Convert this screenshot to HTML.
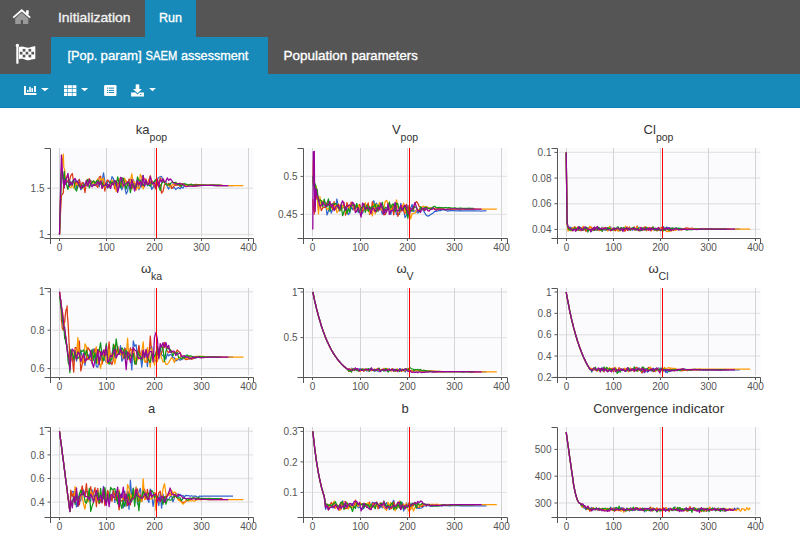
<!DOCTYPE html><html><head><meta charset="utf-8"><style>
html,body{margin:0;padding:0;width:800px;height:550px;overflow:hidden;background:#fff;font-family:"Liberation Sans",sans-serif}
.abs{position:absolute}
.t{position:absolute;white-space:nowrap;color:#fff;font-size:13px;line-height:1}
</style></head><body>

<div class="abs" style="left:0;top:0;width:800px;height:37px;background:#555555"></div>
<div class="abs" style="left:145px;top:0;width:51px;height:37px;background:#178ab9"></div>
<div class="abs" style="left:0;top:37px;width:800px;height:37px;background:#555555"></div>
<div class="abs" style="left:51px;top:37px;width:217px;height:37px;background:#178ab9"></div>
<div class="abs" style="left:0;top:74px;width:800px;height:33px;background:#178ab9"></div>
<div class="abs" style="left:0;top:107px;width:800px;height:1px;background:#0e7fb3"></div>
<svg class="abs" style="left:0;top:0" width="800" height="108" font-family="Liberation Sans, sans-serif">
<g stroke-width="0.35" font-size="13.5">
<text x="58" y="22" fill="#f2f2f2" stroke="#f2f2f2" textLength="72.5" lengthAdjust="spacingAndGlyphs">Initialization</text>
<text x="159" y="22" fill="#fff" stroke="#fff" textLength="23" lengthAdjust="spacingAndGlyphs">Run</text>
<text x="67.45" y="60.1" fill="#fff" stroke="#fff" textLength="29.95" lengthAdjust="spacingAndGlyphs">[Pop.</text>
<text x="100.60" y="60.1" fill="#fff" stroke="#fff" textLength="41.20" lengthAdjust="spacingAndGlyphs">param]</text>
<text x="145.60" y="60.1" fill="#fff" stroke="#fff" textLength="31.60" lengthAdjust="spacingAndGlyphs">SAEM</text>
<text x="180.95" y="60.1" fill="#fff" stroke="#fff" textLength="67.45" lengthAdjust="spacingAndGlyphs">assessment</text>
<text x="283.55" y="60.1" fill="#fff" stroke="#fff" textLength="63.75" lengthAdjust="spacingAndGlyphs">Population</text>
<text x="351.45" y="60.1" fill="#fff" stroke="#fff" textLength="66.25" lengthAdjust="spacingAndGlyphs">parameters</text>
</g>
<path d="M13.2 17.6 L21.7 10.2 L30.2 17.6" fill="none" stroke="#fff" stroke-width="1.8"/>
<rect x="26.1" y="10.3" width="2.6" height="4.2" fill="#fff"/>
<path d="M15.2 18.4 L21.7 12.6 L28.3 18.4 V24 H23 V20 H20.8 V24 H15.2 Z" fill="#999"/>
<rect x="16.3" y="45" width="2.2" height="18.7" fill="#fff"/>
<circle cx="17.4" cy="45.3" r="1.6" fill="#fff"/>
<path d="M19 47 C23 45 27 48.8 30.5 47.3 C32.5 46.6 34 46.3 35.3 46.3 V59 C32 58.8 30 60.8 26.5 60 C23 59.2 21.5 58.3 19 59.3 Z" fill="#fff"/>
<rect x="22.7" y="48.9" width="2.7" height="2.7" fill="#5a5a5a"/>
<rect x="28.5" y="48.9" width="2.7" height="2.7" fill="#5a5a5a"/>
<rect x="19.8" y="51.8" width="2.7" height="2.7" fill="#5a5a5a"/>
<rect x="25.6" y="51.8" width="2.7" height="2.7" fill="#5a5a5a"/>
<rect x="31.4" y="51.8" width="2.7" height="2.7" fill="#5a5a5a"/>
<rect x="22.7" y="54.7" width="2.7" height="2.7" fill="#5a5a5a"/>
<rect x="28.5" y="54.7" width="2.7" height="2.7" fill="#5a5a5a"/>
<g fill="#fff"><rect x="24" y="86" width="2" height="9"/><rect x="24" y="93" width="12.4" height="2"/><rect x="27" y="90" width="1.6" height="2"/><rect x="29.2" y="86.8" width="1.6" height="5.2"/><rect x="31.4" y="88.2" width="1.6" height="3.8"/><rect x="34" y="86" width="1.9" height="6"/><path d="M41 88 H48.8 L44.9 91.3 Z"/></g>
<rect x="64" y="85.2" width="12.4" height="10.8" fill="#fff"/>
<g fill="#178ab9"><rect x="67.3" y="85" width="0.6" height="11"/><rect x="71.9" y="85" width="0.6" height="11"/><rect x="64" y="88.2" width="12.5" height="0.7"/><rect x="64" y="92.2" width="12.5" height="0.7"/></g>
<path d="M81 88 H88.2 L84.6 91.3 Z" fill="#fff"/>
<rect x="104.1" y="85.1" width="12.4" height="10.9" rx="1.2" fill="#fff"/>
<g fill="#178ab9"><rect x="106.9" y="87.6" width="1.1" height="1"/><rect x="106.9" y="89.9" width="1.1" height="1"/><rect x="106.9" y="92" width="1.1" height="1"/><rect x="108.7" y="87.6" width="5.4" height="1"/><rect x="108.7" y="89.9" width="5.4" height="1"/><rect x="108.7" y="92" width="5.4" height="1"/></g>
<g fill="#fff"><rect x="135.7" y="84.4" width="3.6" height="5"/><path d="M133 88.9 H142 L137.5 93.2 Z"/><path d="M131.1 92.6 H135.3 L137.5 94.6 L139.7 92.6 H143.9 V96.4 H131.1 Z"/><path d="M149.1 88.1 H155.9 L152.5 91.2 Z"/></g>
<rect x="140" y="94.2" width="1.4" height="0.9" fill="#178ab9"/>
</svg>
<svg class="abs" style="left:0;top:108px" width="800" height="442" viewBox="0 108 800 442" font-family="Liberation Sans, sans-serif">
<rect x="52" y="148" width="201.5" height="88.5" fill="#fbfbfd"/>
<line x1="52" y1="234.50" x2="253" y2="234.50" stroke="#e6e6e8" stroke-width="1.4"/>
<line x1="52" y1="188.30" x2="253" y2="188.30" stroke="#e6e6e8" stroke-width="1.4"/>
<line x1="59.50" y1="148" x2="59.50" y2="236.5" stroke="#d4d4d6" stroke-width="1"/>
<line x1="106.50" y1="148" x2="106.50" y2="236.5" stroke="#d4d4d6" stroke-width="1"/>
<line x1="154.50" y1="148" x2="154.50" y2="236.5" stroke="#d4d4d6" stroke-width="1"/>
<line x1="201.50" y1="148" x2="201.50" y2="236.5" stroke="#d4d4d6" stroke-width="1"/>
<line x1="248.50" y1="148" x2="248.50" y2="236.5" stroke="#d4d4d6" stroke-width="1"/>
<polyline points="59.5,234.5 60.0,220.2 60.4,205.9 60.9,191.5 61.4,177.2 61.9,177.7 62.3,178.1 62.8,178.6 63.3,179.1 63.8,184.6 64.2,179.3 64.7,176.9 65.2,177.3 66.6,182.5 68.0,182.4 69.4,181.7 70.8,185.4 72.3,182.0 73.7,179.9 75.1,179.8 76.5,188.7 77.9,181.0 79.4,179.5 80.8,189.7 82.2,188.3 83.6,182.7 85.0,185.7 86.4,185.3 87.9,184.3 89.3,182.3 90.7,180.3 92.1,183.2 93.5,185.5 95.0,183.1 96.4,184.1 97.8,183.9 99.2,186.6 100.6,179.7 102.1,180.9 103.5,172.8 104.9,181.9 106.3,187.1 107.7,181.5 109.1,180.9 110.6,183.1 112.0,176.6 113.4,178.6 114.8,185.6 116.2,183.9 117.7,190.4 119.1,187.0 120.5,180.1 121.9,190.0 123.3,182.9 124.7,186.3 126.2,194.0 127.6,191.2 129.0,180.6 130.4,179.3 131.8,179.6 133.3,179.7 134.7,183.7 136.1,186.0 137.5,179.7 138.9,189.6 140.3,187.0 141.8,176.8 143.2,175.5 144.6,186.5 146.0,181.3 147.4,185.8 148.9,184.3 150.3,181.5 151.7,189.3 153.1,187.5 154.5,181.9 156.0,181.1 157.4,179.0 158.8,177.3 160.2,176.8 161.6,176.4 163.0,180.7 164.5,181.6 165.9,181.4 167.3,186.7 168.7,189.2 170.1,184.1 171.6,187.1 173.0,188.0 174.4,187.6 175.8,189.6 177.2,188.1 178.6,187.6 180.1,188.8 181.5,187.0 182.9,188.1 184.3,185.7 185.7,186.1 187.2,185.4 188.6,185.1 190.0,185.0 191.4,185.1 192.8,184.7 194.2,184.7 195.7,185.1 197.1,185.3 198.5,185.4 199.9,185.3 201.3,185.4 202.8,185.2 204.2,185.4 205.6,185.5 207.0,185.4 208.4,185.4 209.9,185.4 211.3,185.4 212.7,185.5 214.1,185.5 215.5,185.5 216.9,185.5 218.4,185.5 219.8,185.5 221.2,185.5 222.6,185.5 224.0,185.5 225.5,185.5 226.9,185.5 228.3,185.5 229.7,185.5 231.1,185.5 232.5,185.5 233.0,185.5" fill="none" stroke="#3366cc" stroke-width="1.25" stroke-linejoin="round"/>
<polyline points="59.5,234.5 60.0,224.8 60.4,215.1 60.9,205.4 61.4,195.7 61.9,195.0 62.3,194.3 62.8,193.6 63.3,192.9 63.8,177.1 64.2,173.3 64.7,184.0 65.2,179.7 66.6,182.5 68.0,180.4 69.4,180.8 70.8,175.7 72.3,173.5 73.7,182.1 75.1,184.4 76.5,181.5 77.9,186.3 79.4,179.3 80.8,187.1 82.2,182.5 83.6,183.9 85.0,192.7 86.4,182.1 87.9,180.1 89.3,178.7 90.7,181.7 92.1,182.4 93.5,181.0 95.0,182.8 96.4,185.6 97.8,187.3 99.2,177.1 100.6,176.2 102.1,188.1 103.5,180.9 104.9,191.1 106.3,182.0 107.7,179.9 109.1,182.2 110.6,183.2 112.0,184.6 113.4,182.3 114.8,188.8 116.2,180.9 117.7,185.8 119.1,179.9 120.5,184.6 121.9,183.3 123.3,179.6 124.7,182.0 126.2,181.0 127.6,185.5 129.0,179.1 130.4,179.6 131.8,189.0 133.3,182.9 134.7,186.4 136.1,189.8 137.5,182.6 138.9,184.9 140.3,180.1 141.8,186.9 143.2,179.1 144.6,178.8 146.0,179.4 147.4,184.2 148.9,179.7 150.3,184.2 151.7,180.3 153.1,183.0 154.5,186.5 156.0,189.2 157.4,183.0 158.8,186.7 160.2,184.6 161.6,193.1 163.0,191.4 164.5,184.7 165.9,183.7 167.3,184.8 168.7,183.3 170.1,185.1 171.6,188.6 173.0,187.2 174.4,185.6 175.8,184.9 177.2,185.3 178.6,184.7 180.1,186.6 181.5,184.0 182.9,183.6 184.3,184.8 185.7,184.6 187.2,184.6 188.6,184.8 190.0,184.6 191.4,184.4 192.8,185.0 194.2,184.8 195.7,184.3 197.1,184.7 198.5,184.6 199.9,184.9 201.3,184.7 202.8,185.0 204.2,185.2 205.6,185.1 207.0,185.2 208.4,185.1 209.9,185.0 211.3,185.1 212.7,185.1 214.1,184.9 215.5,185.0 216.9,185.0 218.4,185.0 219.8,185.0 221.2,185.0 222.6,185.0" fill="none" stroke="#dc3912" stroke-width="1.25" stroke-linejoin="round"/>
<polyline points="59.5,234.5 60.0,217.9 60.4,201.2 60.9,184.6 61.4,168.0 61.9,164.5 62.3,161.0 62.8,157.6 63.3,154.1 63.8,167.5 64.2,168.3 64.7,170.2 65.2,176.9 66.6,177.9 68.0,175.8 69.4,187.0 70.8,187.7 72.3,184.5 73.7,188.1 75.1,186.3 76.5,183.4 77.9,185.5 79.4,184.8 80.8,187.6 82.2,188.1 83.6,185.8 85.0,187.6 86.4,180.0 87.9,179.9 89.3,180.1 90.7,185.5 92.1,183.5 93.5,181.5 95.0,185.8 96.4,181.2 97.8,178.8 99.2,184.3 100.6,178.5 102.1,180.1 103.5,178.0 104.9,187.4 106.3,185.0 107.7,185.0 109.1,186.8 110.6,186.3 112.0,180.0 113.4,182.7 114.8,184.1 116.2,191.7 117.7,187.0 119.1,178.6 120.5,185.5 121.9,184.1 123.3,187.1 124.7,178.2 126.2,182.5 127.6,181.6 129.0,184.5 130.4,181.5 131.8,173.8 133.3,183.1 134.7,181.7 136.1,189.7 137.5,187.4 138.9,188.6 140.3,174.3 141.8,177.2 143.2,189.0 144.6,184.9 146.0,183.6 147.4,184.1 148.9,179.6 150.3,175.5 151.7,182.3 153.1,184.7 154.5,181.8 156.0,183.9 157.4,178.8 158.8,184.1 160.2,177.5 161.6,180.7 163.0,180.8 164.5,180.6 165.9,184.3 167.3,184.7 168.7,185.6 170.1,186.9 171.6,185.4 173.0,184.5 174.4,184.7 175.8,182.8 177.2,184.4 178.6,183.3 180.1,183.4 181.5,184.7 182.9,185.0 184.3,184.8 185.7,185.6 187.2,185.7 188.6,185.6 190.0,185.5 191.4,185.8 192.8,185.4 194.2,185.9 195.7,186.3 197.1,186.0 198.5,185.5 199.9,185.5 201.3,185.3 202.8,185.4 204.2,185.4 205.6,185.3 207.0,185.3 208.4,185.3 209.9,185.3 211.3,185.3 212.7,185.4 214.1,185.5 215.5,185.6 216.9,185.5 218.4,185.5 219.8,185.5 221.2,185.5 222.6,185.5 224.0,185.5 225.5,185.5 226.9,185.5 228.3,185.5 229.7,185.5 231.1,185.5 232.5,185.5 234.0,185.5 235.4,185.5 236.8,185.5 238.2,185.5 239.6,185.5 241.1,185.5 242.5,185.5 243.4,185.5" fill="none" stroke="#ff9900" stroke-width="1.25" stroke-linejoin="round"/>
<polyline points="59.5,234.5 60.0,218.8 60.4,203.1 60.9,187.4 61.4,171.7 61.9,173.1 62.3,174.4 62.8,175.8 63.3,177.2 63.8,180.8 64.2,171.4 64.7,180.2 65.2,178.3 66.6,184.8 68.0,189.5 69.4,179.7 70.8,184.9 72.3,181.7 73.7,180.4 75.1,188.8 76.5,191.0 77.9,186.1 79.4,184.1 80.8,187.7 82.2,187.9 83.6,185.1 85.0,184.6 86.4,183.1 87.9,179.3 89.3,187.8 90.7,184.8 92.1,182.2 93.5,180.9 95.0,183.4 96.4,181.3 97.8,180.1 99.2,182.3 100.6,184.1 102.1,182.1 103.5,185.9 104.9,185.4 106.3,184.6 107.7,184.7 109.1,187.6 110.6,181.5 112.0,183.4 113.4,181.7 114.8,181.1 116.2,185.7 117.7,176.9 119.1,183.8 120.5,187.8 121.9,178.1 123.3,178.1 124.7,183.1 126.2,189.0 127.6,183.2 129.0,182.6 130.4,192.6 131.8,184.7 133.3,184.0 134.7,188.1 136.1,187.0 137.5,176.9 138.9,180.5 140.3,180.5 141.8,182.9 143.2,185.5 144.6,183.7 146.0,181.5 147.4,184.8 148.9,184.9 150.3,186.3 151.7,182.9 153.1,182.8 154.5,181.3 156.0,179.3 157.4,183.1 158.8,185.6 160.2,190.7 161.6,183.6 163.0,181.4 164.5,182.6 165.9,184.4 167.3,185.2 168.7,184.6 170.1,183.7 171.6,182.7 173.0,182.2 174.4,182.9 175.8,182.2 177.2,184.1 178.6,184.6 180.1,184.7 181.5,186.0 182.9,184.8 184.3,183.5 185.7,184.2 187.2,184.4 188.6,185.5 190.0,184.4 191.4,184.4 192.8,185.1 194.2,185.4 195.7,185.2 197.1,185.2 198.5,185.2 199.9,185.1 201.3,185.1 202.8,185.1 204.2,185.2 205.6,185.2 207.0,185.3 208.4,185.3 209.9,185.2 211.3,185.1 212.7,185.1 214.1,185.1 215.5,185.1 216.9,185.0 218.4,185.1 219.8,185.0 220.3,185.0" fill="none" stroke="#109618" stroke-width="1.25" stroke-linejoin="round"/>
<polyline points="59.5,234.5 60.0,214.6 60.4,194.8 60.9,174.9 61.4,155.0 61.9,162.2 62.3,169.4 62.8,176.5 63.3,183.7 63.8,181.9 64.2,187.9 64.7,179.9 65.2,184.5 66.6,177.7 68.0,173.4 69.4,186.1 70.8,181.8 72.3,185.2 73.7,179.8 75.1,178.4 76.5,181.3 77.9,181.9 79.4,185.8 80.8,188.6 82.2,185.3 83.6,187.2 85.0,186.0 86.4,180.4 87.9,186.4 89.3,179.7 90.7,184.6 92.1,186.8 93.5,184.6 95.0,185.4 96.4,183.8 97.8,181.6 99.2,184.4 100.6,181.2 102.1,188.3 103.5,186.0 104.9,185.3 106.3,183.4 107.7,188.0 109.1,184.0 110.6,188.5 112.0,182.9 113.4,184.9 114.8,180.4 116.2,182.4 117.7,192.3 119.1,186.5 120.5,177.4 121.9,178.3 123.3,185.8 124.7,184.6 126.2,183.6 127.6,181.8 129.0,182.2 130.4,188.2 131.8,179.6 133.3,185.8 134.7,191.2 136.1,184.3 137.5,180.3 138.9,184.9 140.3,181.6 141.8,185.3 143.2,175.7 144.6,186.2 146.0,180.1 147.4,184.2 148.9,184.2 150.3,176.1 151.7,182.1 153.1,184.1 154.5,182.5 156.0,187.9 157.4,179.1 158.8,186.9 160.2,178.7 161.6,182.2 163.0,178.6 164.5,182.3 165.9,180.9 167.3,177.9 168.7,180.5 170.1,178.8 171.6,180.2 173.0,182.8 174.4,183.5 175.8,184.1 177.2,183.6 178.6,183.6 180.1,183.3 181.5,184.1 182.9,184.4 184.3,185.3 185.7,186.6 187.2,186.5 188.6,186.0 190.0,186.2 191.4,186.0 192.8,186.3 194.2,185.9 195.7,186.1 197.1,185.8 198.5,186.0 199.9,185.5 201.3,185.6 202.8,185.4 204.2,185.3 205.6,185.3 207.0,185.3 208.4,185.4 209.9,185.4 211.3,185.4 212.7,185.4 214.1,185.4 215.5,185.5 216.9,185.5 218.4,185.5 219.8,185.5 221.2,185.5 222.6,185.5 224.0,185.5 225.5,185.5 226.9,185.5 228.3,185.5" fill="none" stroke="#990099" stroke-width="1.25" stroke-linejoin="round"/>
<line x1="156.50" y1="148" x2="156.50" y2="238" stroke="#ff0000" stroke-width="1"/>
<path d="M44.5,148.5 H50.5 V244 M44.5,238.5 H253.5 V244" fill="none" stroke="#555" stroke-width="1"/>
<line x1="47.5" y1="234.50" x2="50.5" y2="234.50" stroke="#555" stroke-width="1"/>
<text x="44.5" y="238.10" font-size="10" fill="#555" text-anchor="end">1</text>
<line x1="47.5" y1="188.30" x2="50.5" y2="188.30" stroke="#555" stroke-width="1"/>
<text x="44.5" y="191.90" font-size="10" fill="#555" text-anchor="end">1.5</text>
<line x1="59.50" y1="238" x2="59.50" y2="241" stroke="#555" stroke-width="1"/>
<text x="59.50" y="250.7" font-size="10" fill="#555" text-anchor="middle">0</text>
<line x1="106.50" y1="238" x2="106.50" y2="241" stroke="#555" stroke-width="1"/>
<text x="106.50" y="250.7" font-size="10" fill="#555" text-anchor="middle">100</text>
<line x1="154.50" y1="238" x2="154.50" y2="241" stroke="#555" stroke-width="1"/>
<text x="154.50" y="250.7" font-size="10" fill="#555" text-anchor="middle">200</text>
<line x1="201.50" y1="238" x2="201.50" y2="241" stroke="#555" stroke-width="1"/>
<text x="201.50" y="250.7" font-size="10" fill="#555" text-anchor="middle">300</text>
<line x1="248.50" y1="238" x2="248.50" y2="241" stroke="#555" stroke-width="1"/>
<text x="248.50" y="250.7" font-size="10" fill="#555" text-anchor="middle">400</text>
<text x="151.5" y="133.5" font-size="13" fill="#333" text-anchor="middle">ka<tspan font-size="10.5" dy="7">pop</tspan></text>
<rect x="305" y="148" width="202.5" height="88.5" fill="#fbfbfd"/>
<line x1="305" y1="176.40" x2="507" y2="176.40" stroke="#e6e6e8" stroke-width="1.4"/>
<line x1="305" y1="214.40" x2="507" y2="214.40" stroke="#e6e6e8" stroke-width="1.4"/>
<line x1="312.50" y1="148" x2="312.50" y2="236.5" stroke="#d4d4d6" stroke-width="1"/>
<line x1="360.50" y1="148" x2="360.50" y2="236.5" stroke="#d4d4d6" stroke-width="1"/>
<line x1="407.50" y1="148" x2="407.50" y2="236.5" stroke="#d4d4d6" stroke-width="1"/>
<line x1="454.50" y1="148" x2="454.50" y2="236.5" stroke="#d4d4d6" stroke-width="1"/>
<line x1="501.50" y1="148" x2="501.50" y2="236.5" stroke="#d4d4d6" stroke-width="1"/>
<polyline points="312.8,176.4 313.3,178.1 313.8,173.2 314.3,172.5 314.7,205.1 315.2,186.3 315.7,189.1 316.1,192.1 317.1,196.5 318.5,210.0 319.9,200.7 321.3,202.4 322.8,202.9 324.2,204.0 325.6,202.9 327.0,215.0 328.4,211.1 329.9,206.1 331.3,213.1 332.7,208.7 334.1,209.1 335.5,209.4 336.9,199.0 338.4,207.0 339.8,211.1 341.2,206.0 342.6,207.9 344.0,207.4 345.5,206.5 346.9,208.6 348.3,214.6 349.7,213.0 351.1,206.8 352.5,209.7 354.0,204.6 355.4,207.0 356.8,206.6 358.2,212.7 359.6,204.7 361.1,209.7 362.5,213.3 363.9,209.5 365.3,206.2 366.7,209.7 368.2,205.0 369.6,207.3 371.0,212.0 372.4,209.8 373.8,200.6 375.2,208.2 376.7,203.1 378.1,211.2 379.5,209.3 380.9,209.4 382.3,214.1 383.8,208.5 385.2,214.6 386.6,209.9 388.0,208.5 389.4,206.4 390.8,214.5 392.3,207.8 393.7,203.8 395.1,207.7 396.5,214.6 397.9,213.1 399.4,214.4 400.8,203.4 402.2,210.4 403.6,209.5 405.0,217.5 406.4,215.7 407.9,205.4 409.3,214.2 410.7,208.5 412.1,204.4 413.5,211.5 415.0,210.7 416.4,211.9 417.8,213.1 419.2,211.8 420.6,209.5 422.0,208.8 423.5,210.6 424.9,213.1 426.3,215.3 427.7,216.2 429.1,215.7 430.6,214.4 432.0,213.9 433.4,212.7 434.8,211.2 436.2,211.3 437.7,210.8 439.1,210.6 440.5,210.6 441.9,210.0 443.3,209.9 444.7,210.2 446.2,210.2 447.6,211.2 449.0,210.9 450.4,210.7 451.8,210.6 453.3,210.6 454.7,210.7 456.1,210.9 457.5,210.9 458.9,210.8 460.3,210.7 461.8,210.8 463.2,210.8 464.6,210.8 466.0,210.8 467.4,210.9 468.9,210.9 470.3,210.9 471.7,210.9 473.1,210.9 474.5,210.9 475.9,210.9 477.4,211.0 478.8,210.9 480.2,211.0 481.6,211.0 483.0,210.9 484.5,210.9 485.9,210.9 486.4,211.0" fill="none" stroke="#3366cc" stroke-width="1.25" stroke-linejoin="round"/>
<polyline points="312.8,199.2 313.3,209.2 313.8,211.1 314.3,214.0 314.7,187.4 315.2,190.0 315.7,197.6 316.1,199.2 317.1,192.4 318.5,199.3 319.9,204.1 321.3,210.6 322.8,207.7 324.2,207.4 325.6,207.4 327.0,202.5 328.4,200.6 329.9,209.3 331.3,204.3 332.7,209.7 334.1,201.6 335.5,209.5 336.9,208.2 338.4,204.2 339.8,205.8 341.2,206.1 342.6,206.9 344.0,202.3 345.5,215.1 346.9,202.6 348.3,206.3 349.7,208.2 351.1,202.1 352.5,204.0 354.0,210.1 355.4,205.3 356.8,207.7 358.2,207.8 359.6,204.5 361.1,208.4 362.5,211.9 363.9,208.0 365.3,206.9 366.7,206.7 368.2,202.9 369.6,214.4 371.0,212.4 372.4,201.6 373.8,210.6 375.2,207.9 376.7,208.5 378.1,210.9 379.5,204.7 380.9,203.8 382.3,209.6 383.8,214.8 385.2,214.4 386.6,211.3 388.0,208.3 389.4,209.3 390.8,209.9 392.3,205.9 393.7,214.8 395.1,207.1 396.5,206.2 397.9,216.4 399.4,212.1 400.8,212.0 402.2,205.3 403.6,210.0 405.0,213.7 406.4,204.3 407.9,213.5 409.3,205.3 410.7,211.2 412.1,210.4 413.5,209.9 415.0,203.3 416.4,201.6 417.8,203.2 419.2,206.5 420.6,207.6 422.0,209.8 423.5,208.7 424.9,210.5 426.3,208.6 427.7,207.4 429.1,209.1 430.6,207.8 432.0,208.7 433.4,208.1 434.8,209.3 436.2,208.9 437.7,209.2 439.1,207.9 440.5,208.3 441.9,209.0 443.3,208.9 444.7,209.5 446.2,209.5 447.6,209.2 449.0,209.4 450.4,209.2 451.8,209.3 453.3,208.8 454.7,209.1 456.1,209.0 457.5,208.9 458.9,209.0 460.3,209.1 461.8,209.1 463.2,209.0 464.6,209.1 466.0,209.1 467.4,209.0 468.9,209.1 470.3,209.1 471.7,209.1 473.1,209.0 474.5,209.1 475.9,209.1" fill="none" stroke="#dc3912" stroke-width="1.25" stroke-linejoin="round"/>
<polyline points="312.8,184.0 313.3,161.2 313.8,165.6 314.3,172.1 314.7,200.4 315.2,197.8 315.7,186.5 316.1,185.9 317.1,194.6 318.5,214.0 319.9,196.7 321.3,206.0 322.8,200.8 324.2,202.4 325.6,205.1 327.0,209.5 328.4,208.4 329.9,209.6 331.3,204.1 332.7,205.4 334.1,207.3 335.5,205.1 336.9,212.6 338.4,210.6 339.8,205.6 341.2,210.5 342.6,205.7 344.0,207.1 345.5,212.0 346.9,213.1 348.3,210.0 349.7,204.9 351.1,204.3 352.5,203.3 354.0,207.0 355.4,210.8 356.8,210.6 358.2,204.9 359.6,207.0 361.1,214.0 362.5,206.5 363.9,209.4 365.3,202.7 366.7,210.5 368.2,207.8 369.6,213.5 371.0,210.0 372.4,216.0 373.8,203.7 375.2,213.8 376.7,204.6 378.1,208.1 379.5,202.3 380.9,209.9 382.3,210.4 383.8,209.2 385.2,201.4 386.6,200.3 388.0,204.1 389.4,202.8 390.8,210.8 392.3,204.3 393.7,205.2 395.1,209.8 396.5,199.9 397.9,207.3 399.4,207.8 400.8,207.4 402.2,208.5 403.6,203.1 405.0,212.1 406.4,209.4 407.9,209.2 409.3,211.6 410.7,218.8 412.1,213.7 413.5,213.4 415.0,213.2 416.4,210.0 417.8,210.4 419.2,209.1 420.6,207.3 422.0,207.3 423.5,206.1 424.9,207.3 426.3,206.6 427.7,207.4 429.1,208.2 430.6,208.7 432.0,208.8 433.4,208.8 434.8,208.2 436.2,209.3 437.7,209.6 439.1,209.1 440.5,208.8 441.9,208.9 443.3,209.0 444.7,209.2 446.2,209.6 447.6,209.4 449.0,209.1 450.4,209.2 451.8,209.3 453.3,209.3 454.7,209.2 456.1,209.2 457.5,209.1 458.9,209.2 460.3,209.1 461.8,209.2 463.2,209.1 464.6,209.1 466.0,209.1 467.4,209.0 468.9,209.0 470.3,209.1 471.7,209.1 473.1,209.1 474.5,209.1 475.9,209.1 477.4,209.1 478.8,209.1 480.2,209.1 481.6,209.1 483.0,209.1 484.5,209.1 485.9,209.1 487.3,209.1 488.7,209.1 490.1,209.1 491.6,209.1 493.0,209.1 494.4,209.1 495.8,209.1 496.8,209.1" fill="none" stroke="#ff9900" stroke-width="1.25" stroke-linejoin="round"/>
<polyline points="312.8,176.4 313.3,184.9 313.8,186.1 314.3,187.1 314.7,193.3 315.2,183.9 315.7,185.8 316.1,191.9 317.1,189.1 318.5,201.8 319.9,199.7 321.3,200.5 322.8,206.6 324.2,199.2 325.6,204.8 327.0,207.0 328.4,198.9 329.9,211.4 331.3,205.3 332.7,203.6 334.1,204.3 335.5,203.5 336.9,204.4 338.4,207.4 339.8,210.3 341.2,204.3 342.6,215.7 344.0,211.7 345.5,207.1 346.9,213.6 348.3,208.5 349.7,212.0 351.1,205.9 352.5,205.3 354.0,204.8 355.4,208.5 356.8,203.4 358.2,210.8 359.6,212.0 361.1,207.6 362.5,207.9 363.9,203.9 365.3,212.5 366.7,205.1 368.2,211.4 369.6,206.7 371.0,208.8 372.4,206.5 373.8,206.5 375.2,203.8 376.7,211.8 378.1,205.0 379.5,206.6 380.9,207.0 382.3,202.3 383.8,210.4 385.2,207.4 386.6,207.9 388.0,209.7 389.4,202.0 390.8,208.1 392.3,204.4 393.7,204.4 395.1,211.6 396.5,203.2 397.9,203.9 399.4,211.3 400.8,207.5 402.2,210.0 403.6,208.7 405.0,205.5 406.4,210.7 407.9,218.2 409.3,207.6 410.7,209.7 412.1,211.4 413.5,207.4 415.0,207.2 416.4,207.0 417.8,210.9 419.2,211.9 420.6,206.8 422.0,208.2 423.5,209.2 424.9,207.4 426.3,207.1 427.7,208.3 429.1,208.2 430.6,209.3 432.0,207.8 433.4,206.9 434.8,206.3 436.2,207.7 437.7,207.6 439.1,207.4 440.5,207.6 441.9,207.5 443.3,207.8 444.7,207.7 446.2,207.6 447.6,207.8 449.0,207.5 450.4,207.8 451.8,208.1 453.3,208.0 454.7,207.9 456.1,208.2 457.5,208.3 458.9,208.2 460.3,208.0 461.8,208.2 463.2,208.3 464.6,208.3 466.0,208.3 467.4,208.4 468.9,208.2 470.3,208.3 471.7,208.3 473.1,208.3 473.6,208.3" fill="none" stroke="#109618" stroke-width="1.25" stroke-linejoin="round"/>
<polyline points="312.8,229.6 313.3,151.7 313.8,153.3 314.3,151.3 314.7,205.4 315.2,211.6 315.7,192.2 316.1,188.8 317.1,195.9 318.5,199.9 319.9,206.2 321.3,205.5 322.8,202.1 324.2,204.6 325.6,206.8 327.0,204.5 328.4,205.3 329.9,201.3 331.3,207.1 332.7,204.1 334.1,210.7 335.5,207.1 336.9,205.6 338.4,205.6 339.8,209.6 341.2,203.9 342.6,200.8 344.0,204.7 345.5,210.3 346.9,207.3 348.3,205.5 349.7,205.0 351.1,206.4 352.5,202.1 354.0,204.0 355.4,212.6 356.8,211.0 358.2,207.6 359.6,211.4 361.1,217.1 362.5,203.1 363.9,204.2 365.3,209.3 366.7,208.0 368.2,207.7 369.6,208.7 371.0,213.7 372.4,207.8 373.8,208.3 375.2,211.8 376.7,208.7 378.1,207.1 379.5,209.6 380.9,202.9 382.3,207.5 383.8,214.1 385.2,209.0 386.6,212.2 388.0,203.7 389.4,214.4 390.8,210.5 392.3,210.6 393.7,210.2 395.1,202.3 396.5,210.9 397.9,211.3 399.4,209.1 400.8,205.2 402.2,210.7 403.6,206.7 405.0,205.1 406.4,207.7 407.9,212.2 409.3,215.0 410.7,208.5 412.1,209.2 413.5,206.7 415.0,202.5 416.4,207.1 417.8,211.3 419.2,210.1 420.6,212.4 422.0,208.6 423.5,208.0 424.9,210.3 426.3,207.7 427.7,210.6 429.1,211.1 430.6,209.3 432.0,209.3 433.4,208.0 434.8,209.3 436.2,210.3 437.7,209.1 439.1,209.0 440.5,209.4 441.9,209.0 443.3,209.4 444.7,209.4 446.2,209.7 447.6,209.3 449.0,209.2 450.4,209.1 451.8,208.8 453.3,208.9 454.7,208.9 456.1,208.9 457.5,209.2 458.9,209.1 460.3,209.1 461.8,209.0 463.2,208.9 464.6,209.0 466.0,209.0 467.4,209.0 468.9,209.1 470.3,209.0 471.7,209.0 473.1,209.1 474.5,209.1 475.9,209.1 477.4,209.1 478.8,209.1 480.2,209.1 481.6,209.1" fill="none" stroke="#990099" stroke-width="1.25" stroke-linejoin="round"/>
<line x1="409.50" y1="148" x2="409.50" y2="238" stroke="#ff0000" stroke-width="1"/>
<path d="M297.5,148.5 H303.5 V244 M297.5,238.5 H507.5 V244" fill="none" stroke="#555" stroke-width="1"/>
<line x1="300.5" y1="176.40" x2="303.5" y2="176.40" stroke="#555" stroke-width="1"/>
<text x="297.5" y="180.00" font-size="10" fill="#555" text-anchor="end">0.5</text>
<line x1="300.5" y1="214.40" x2="303.5" y2="214.40" stroke="#555" stroke-width="1"/>
<text x="297.5" y="218.00" font-size="10" fill="#555" text-anchor="end">0.45</text>
<line x1="312.50" y1="238" x2="312.50" y2="241" stroke="#555" stroke-width="1"/>
<text x="312.50" y="250.7" font-size="10" fill="#555" text-anchor="middle">0</text>
<line x1="360.50" y1="238" x2="360.50" y2="241" stroke="#555" stroke-width="1"/>
<text x="360.50" y="250.7" font-size="10" fill="#555" text-anchor="middle">100</text>
<line x1="407.50" y1="238" x2="407.50" y2="241" stroke="#555" stroke-width="1"/>
<text x="407.50" y="250.7" font-size="10" fill="#555" text-anchor="middle">200</text>
<line x1="454.50" y1="238" x2="454.50" y2="241" stroke="#555" stroke-width="1"/>
<text x="454.50" y="250.7" font-size="10" fill="#555" text-anchor="middle">300</text>
<line x1="501.50" y1="238" x2="501.50" y2="241" stroke="#555" stroke-width="1"/>
<text x="501.50" y="250.7" font-size="10" fill="#555" text-anchor="middle">400</text>
<text x="405.0" y="133.5" font-size="13" fill="#333" text-anchor="middle">V<tspan font-size="10.5" dy="7">pop</tspan></text>
<rect x="559" y="148" width="201.5" height="88.5" fill="#fbfbfd"/>
<line x1="559" y1="152.40" x2="760" y2="152.40" stroke="#e6e6e8" stroke-width="1.4"/>
<line x1="559" y1="178.06" x2="760" y2="178.06" stroke="#e6e6e8" stroke-width="1.4"/>
<line x1="559" y1="203.72" x2="760" y2="203.72" stroke="#e6e6e8" stroke-width="1.4"/>
<line x1="559" y1="229.38" x2="760" y2="229.38" stroke="#e6e6e8" stroke-width="1.4"/>
<line x1="566.50" y1="148" x2="566.50" y2="236.5" stroke="#d4d4d6" stroke-width="1"/>
<line x1="613.50" y1="148" x2="613.50" y2="236.5" stroke="#d4d4d6" stroke-width="1"/>
<line x1="660.50" y1="148" x2="660.50" y2="236.5" stroke="#d4d4d6" stroke-width="1"/>
<line x1="708.50" y1="148" x2="708.50" y2="236.5" stroke="#d4d4d6" stroke-width="1"/>
<line x1="755.50" y1="148" x2="755.50" y2="236.5" stroke="#d4d4d6" stroke-width="1"/>
<polyline points="566.2,152.4 567.1,223.0 568.1,227.6 569.0,227.4 569.9,227.1 570.9,227.6 571.8,227.5 572.8,230.2 573.7,229.8 574.7,228.8 575.6,228.3 576.6,230.4 577.5,228.8 578.5,228.6 579.4,226.6 580.4,227.6 581.3,229.2 582.2,229.6 583.2,230.1 584.1,229.9 585.1,228.5 586.0,229.9 587.0,229.7 587.9,229.6 588.9,227.3 589.8,229.3 590.8,231.6 591.7,231.2 592.6,230.2 593.6,227.3 594.5,228.3 595.5,229.7 596.4,230.4 597.4,229.1 598.3,228.4 599.3,227.9 600.2,228.8 601.2,230.0 602.1,227.1 603.0,228.8 604.0,228.0 604.9,230.3 605.9,230.3 606.8,229.2 607.8,227.7 608.7,227.5 609.7,227.7 610.6,227.0 611.6,230.4 612.5,229.9 613.4,230.2 614.4,228.9 615.3,229.4 616.3,228.6 617.2,229.5 618.2,229.9 619.1,228.2 620.1,229.2 621.0,230.3 622.0,229.5 622.9,228.3 623.8,228.7 624.8,229.8 625.7,229.1 626.7,228.8 627.6,230.2 628.6,229.8 629.5,228.5 630.5,229.3 631.4,228.2 632.4,230.3 633.3,228.7 634.3,230.1 635.2,229.9 636.1,228.6 637.1,230.2 638.0,229.2 639.0,227.1 639.9,229.2 640.9,230.6 641.8,229.4 642.8,230.2 643.7,228.8 644.7,228.4 645.6,229.9 646.5,228.9 647.5,227.6 648.4,229.9 649.4,228.8 650.3,228.7 651.3,229.9 652.2,228.5 653.2,228.6 654.1,230.3 655.1,228.4 656.0,230.0 656.9,229.1 657.9,229.1 658.8,227.5 659.8,229.7 660.7,230.4 661.7,229.2 662.6,228.7 663.6,226.6 664.5,229.4 665.5,228.3 666.4,227.2 667.3,227.3 668.3,227.8 669.2,227.9 670.2,228.0 671.1,228.4 672.1,228.3 673.0,228.4 674.0,228.6 674.9,228.4 675.9,228.5 676.8,227.8 677.7,228.9 678.7,229.8 679.6,229.6 680.6,229.4 681.5,230.1 682.5,229.0 683.4,228.8 684.4,228.5 685.3,229.0 686.3,229.2 687.2,228.7 688.1,228.9 689.1,229.1 690.0,229.1 691.0,229.0 691.9,229.0 692.9,229.2 693.8,228.9 694.8,228.9 695.7,229.0 696.7,229.0 697.6,229.0 698.6,228.9 699.5,228.9 700.4,229.0 701.4,228.8 702.3,228.9 703.3,228.9 704.2,228.9 705.2,228.9 706.1,228.9 707.1,228.9 708.0,229.0 709.0,229.0 709.9,228.9 710.8,228.9 711.8,228.9 712.7,229.0 713.7,228.9 714.6,229.0 715.6,229.0 716.5,229.0 717.5,229.0 718.4,229.0 719.4,229.0 720.3,229.0 721.2,229.0 722.2,229.0 723.1,229.0 724.1,229.0 725.0,229.0 726.0,229.0 726.9,229.0 727.9,229.0 728.8,229.0 729.8,229.0 730.7,229.0 731.6,229.0 732.6,229.0 733.5,229.0 734.5,229.0 735.4,229.0 736.4,229.0 737.3,229.0 738.3,229.0 739.2,229.0 739.7,229.0" fill="none" stroke="#3366cc" stroke-width="1.25" stroke-linejoin="round"/>
<polyline points="566.2,152.4 567.1,223.0 568.1,229.6 569.0,229.4 569.9,228.6 570.9,229.4 571.8,229.3 572.8,230.3 573.7,228.0 574.7,226.7 575.6,229.4 576.6,230.7 577.5,227.1 578.5,227.2 579.4,230.6 580.4,229.9 581.3,229.0 582.2,227.4 583.2,230.3 584.1,229.8 585.1,228.8 586.0,231.5 587.0,229.2 587.9,230.3 588.9,229.8 589.8,228.1 590.8,227.2 591.7,227.4 592.6,230.2 593.6,227.7 594.5,228.6 595.5,228.5 596.4,227.7 597.4,227.6 598.3,229.0 599.3,230.6 600.2,228.7 601.2,229.1 602.1,229.7 603.0,228.1 604.0,229.0 604.9,227.6 605.9,227.6 606.8,228.4 607.8,229.3 608.7,228.2 609.7,228.3 610.6,230.3 611.6,228.4 612.5,229.4 613.4,229.9 614.4,230.0 615.3,230.8 616.3,229.1 617.2,230.3 618.2,229.5 619.1,229.5 620.1,229.5 621.0,228.0 622.0,229.3 622.9,229.9 623.8,228.4 624.8,231.3 625.7,230.0 626.7,229.1 627.6,230.4 628.6,228.8 629.5,226.9 630.5,230.4 631.4,229.3 632.4,229.0 633.3,228.0 634.3,227.0 635.2,229.0 636.1,229.1 637.1,225.9 638.0,229.8 639.0,230.8 639.9,228.9 640.9,228.7 641.8,228.6 642.8,229.3 643.7,228.3 644.7,227.0 645.6,226.9 646.5,229.5 647.5,229.4 648.4,230.3 649.4,229.1 650.3,227.8 651.3,229.6 652.2,227.4 653.2,227.1 654.1,229.6 655.1,228.9 656.0,229.2 656.9,228.5 657.9,228.8 658.8,230.3 659.8,228.4 660.7,228.6 661.7,227.4 662.6,227.2 663.6,228.6 664.5,228.4 665.5,228.9 666.4,228.1 667.3,229.3 668.3,229.9 669.2,229.7 670.2,229.1 671.1,228.7 672.1,228.4 673.0,230.6 674.0,229.6 674.9,229.5 675.9,229.7 676.8,229.3 677.7,228.5 678.7,228.9 679.6,228.7 680.6,228.8 681.5,228.8 682.5,228.5 683.4,228.5 684.4,228.7 685.3,228.2 686.3,227.9 687.2,228.1 688.1,228.2 689.1,228.4 690.0,228.5 691.0,228.3 691.9,228.2 692.9,228.3 693.8,228.6 694.8,228.5 695.7,228.6 696.7,228.8 697.6,228.9 698.6,228.8 699.5,229.0 700.4,229.1 701.4,229.0 702.3,229.0 703.3,229.1 704.2,229.0 705.2,229.0 706.1,229.1 707.1,229.1 708.0,229.0 709.0,229.0 709.9,229.0 710.8,229.0 711.8,229.0 712.7,229.1 713.7,229.0 714.6,229.0 715.6,229.0 716.5,229.0 717.5,229.0 718.4,229.0 719.4,229.0 720.3,229.0 721.2,229.0 722.2,229.0 723.1,229.0 724.1,229.0 725.0,229.0 726.0,229.0 726.9,229.0 727.9,229.0 728.8,229.0 729.3,229.0" fill="none" stroke="#dc3912" stroke-width="1.25" stroke-linejoin="round"/>
<polyline points="566.2,152.4 567.1,223.0 568.1,231.2 569.0,227.9 569.9,229.2 570.9,231.0 571.8,227.8 572.8,227.7 573.7,229.4 574.7,229.8 575.6,227.2 576.6,229.5 577.5,228.5 578.5,229.0 579.4,228.2 580.4,230.6 581.3,229.7 582.2,228.0 583.2,226.2 584.1,229.2 585.1,229.0 586.0,229.7 587.0,227.7 587.9,229.1 588.9,228.7 589.8,226.2 590.8,226.7 591.7,230.4 592.6,229.1 593.6,230.3 594.5,227.9 595.5,230.0 596.4,227.4 597.4,230.4 598.3,228.8 599.3,230.1 600.2,229.9 601.2,230.5 602.1,227.7 603.0,229.6 604.0,229.1 604.9,228.4 605.9,229.8 606.8,229.2 607.8,231.1 608.7,228.6 609.7,226.3 610.6,231.2 611.6,228.3 612.5,228.8 613.4,230.5 614.4,228.7 615.3,229.0 616.3,228.4 617.2,230.1 618.2,231.3 619.1,228.5 620.1,231.0 621.0,229.8 622.0,229.6 622.9,229.8 623.8,228.7 624.8,228.0 625.7,226.1 626.7,228.6 627.6,227.0 628.6,228.9 629.5,227.4 630.5,229.7 631.4,228.7 632.4,229.3 633.3,229.3 634.3,229.0 635.2,230.3 636.1,229.4 637.1,226.7 638.0,228.1 639.0,230.9 639.9,228.5 640.9,227.3 641.8,228.3 642.8,230.1 643.7,229.9 644.7,229.4 645.6,229.5 646.5,230.9 647.5,228.8 648.4,227.4 649.4,228.5 650.3,228.3 651.3,231.0 652.2,229.8 653.2,229.0 654.1,229.1 655.1,230.0 656.0,230.7 656.9,230.3 657.9,230.8 658.8,227.5 659.8,229.1 660.7,228.2 661.7,229.0 662.6,229.2 663.6,228.9 664.5,230.2 665.5,229.4 666.4,231.6 667.3,231.3 668.3,231.2 669.2,231.7 670.2,230.8 671.1,231.2 672.1,230.1 673.0,230.0 674.0,229.2 674.9,229.9 675.9,230.5 676.8,229.2 677.7,229.6 678.7,229.3 679.6,229.3 680.6,230.0 681.5,229.9 682.5,229.6 683.4,229.3 684.4,229.4 685.3,229.5 686.3,229.1 687.2,229.0 688.1,229.1 689.1,229.1 690.0,228.9 691.0,228.6 691.9,228.7 692.9,228.7 693.8,228.9 694.8,228.9 695.7,229.2 696.7,229.2 697.6,229.1 698.6,229.2 699.5,229.2 700.4,229.0 701.4,229.1 702.3,229.1 703.3,229.0 704.2,229.1 705.2,229.1 706.1,229.0 707.1,229.0 708.0,229.0 709.0,229.1 709.9,229.1 710.8,229.1 711.8,229.1 712.7,229.1 713.7,229.0 714.6,229.1 715.6,229.0 716.5,229.0 717.5,229.0 718.4,229.0 719.4,229.0 720.3,229.0 721.2,229.0 722.2,229.0 723.1,229.0 724.1,229.0 725.0,229.0 726.0,229.0 726.9,229.0 727.9,229.0 728.8,229.0 729.8,229.0 730.7,229.0 731.6,229.0 732.6,229.0 733.5,229.0 734.5,229.0 735.4,229.0 736.4,229.0 737.3,229.0 738.3,229.0 739.2,229.0 740.2,229.0 741.1,229.0 742.0,229.0 743.0,229.0 743.9,229.0 744.9,229.0 745.8,229.0 746.8,229.0 747.7,229.0 748.7,229.0 749.6,229.0 750.1,229.0" fill="none" stroke="#ff9900" stroke-width="1.25" stroke-linejoin="round"/>
<polyline points="566.2,152.4 567.1,223.0 568.1,227.4 569.0,229.5 569.9,230.4 570.9,229.0 571.8,230.0 572.8,229.0 573.7,228.9 574.7,228.3 575.6,227.8 576.6,228.7 577.5,229.9 578.5,230.2 579.4,227.0 580.4,228.8 581.3,228.4 582.2,230.2 583.2,229.1 584.1,228.6 585.1,229.7 586.0,227.1 587.0,227.6 587.9,232.0 588.9,229.6 589.8,229.6 590.8,230.2 591.7,230.1 592.6,229.3 593.6,228.4 594.5,230.5 595.5,229.1 596.4,227.3 597.4,230.0 598.3,227.3 599.3,227.9 600.2,230.1 601.2,228.5 602.1,231.5 603.0,229.4 604.0,229.2 604.9,228.8 605.9,229.2 606.8,229.7 607.8,227.6 608.7,228.9 609.7,228.2 610.6,229.1 611.6,229.5 612.5,229.4 613.4,230.0 614.4,227.9 615.3,228.3 616.3,229.2 617.2,227.2 618.2,226.9 619.1,229.3 620.1,230.5 621.0,227.3 622.0,229.9 622.9,228.3 623.8,227.5 624.8,228.3 625.7,228.8 626.7,228.1 627.6,228.9 628.6,228.2 629.5,229.9 630.5,230.0 631.4,228.4 632.4,228.0 633.3,227.3 634.3,229.4 635.2,228.8 636.1,229.8 637.1,229.7 638.0,228.0 639.0,230.4 639.9,230.6 640.9,230.7 641.8,229.9 642.8,227.7 643.7,228.6 644.7,230.1 645.6,228.8 646.5,227.3 647.5,228.9 648.4,229.2 649.4,229.2 650.3,229.0 651.3,229.4 652.2,228.1 653.2,227.0 654.1,229.1 655.1,230.1 656.0,228.4 656.9,230.8 657.9,228.1 658.8,229.9 659.8,229.7 660.7,229.8 661.7,229.7 662.6,231.7 663.6,229.3 664.5,230.2 665.5,228.5 666.4,227.6 667.3,229.2 668.3,229.6 669.2,230.4 670.2,228.8 671.1,229.3 672.1,227.8 673.0,228.5 674.0,228.4 674.9,228.7 675.9,227.9 676.8,228.4 677.7,228.5 678.7,228.1 679.6,228.3 680.6,228.3 681.5,229.0 682.5,229.0 683.4,229.3 684.4,229.4 685.3,229.5 686.3,230.0 687.2,230.0 688.1,229.7 689.1,229.6 690.0,229.5 691.0,229.5 691.9,229.5 692.9,229.5 693.8,229.2 694.8,229.2 695.7,229.1 696.7,229.2 697.6,229.1 698.6,229.0 699.5,229.1 700.4,229.2 701.4,229.0 702.3,229.0 703.3,229.0 704.2,229.0 705.2,229.0 706.1,229.0 707.1,229.0 708.0,228.9 709.0,229.0 709.9,229.0 710.8,229.0 711.8,229.0 712.7,229.0 713.7,229.0 714.6,229.0 715.6,229.0 716.5,229.0 717.5,229.0 718.4,229.0 719.4,229.0 720.3,229.0 721.2,229.0 722.2,229.0 723.1,229.0 724.1,229.0 725.0,229.0 726.0,229.0 726.9,229.0" fill="none" stroke="#109618" stroke-width="1.25" stroke-linejoin="round"/>
<polyline points="566.2,152.4 567.1,223.0 568.1,227.2 569.0,227.7 569.9,228.7 570.9,228.9 571.8,229.3 572.8,230.9 573.7,229.3 574.7,229.1 575.6,231.3 576.6,229.1 577.5,229.6 578.5,226.9 579.4,229.1 580.4,228.0 581.3,230.7 582.2,229.3 583.2,229.4 584.1,227.1 585.1,226.9 586.0,228.1 587.0,228.6 587.9,229.1 588.9,229.5 589.8,229.3 590.8,231.9 591.7,229.1 592.6,228.7 593.6,230.0 594.5,226.8 595.5,229.4 596.4,227.6 597.4,226.5 598.3,229.8 599.3,228.9 600.2,229.2 601.2,228.3 602.1,228.6 603.0,229.8 604.0,228.8 604.9,228.3 605.9,227.9 606.8,228.8 607.8,229.3 608.7,229.9 609.7,229.8 610.6,230.3 611.6,230.4 612.5,229.2 613.4,227.9 614.4,229.3 615.3,229.4 616.3,228.4 617.2,228.1 618.2,228.1 619.1,229.2 620.1,230.1 621.0,229.1 622.0,227.9 622.9,231.6 623.8,229.0 624.8,228.8 625.7,228.9 626.7,227.4 627.6,228.8 628.6,229.8 629.5,228.1 630.5,229.0 631.4,229.2 632.4,228.5 633.3,229.4 634.3,228.2 635.2,228.8 636.1,228.6 637.1,229.9 638.0,229.2 639.0,230.2 639.9,230.4 640.9,227.3 641.8,229.9 642.8,230.1 643.7,228.2 644.7,229.0 645.6,229.6 646.5,229.9 647.5,228.3 648.4,229.5 649.4,227.7 650.3,230.7 651.3,228.0 652.2,229.2 653.2,229.6 654.1,228.3 655.1,228.4 656.0,228.5 656.9,230.1 657.9,228.1 658.8,227.7 659.8,230.1 660.7,230.5 661.7,228.8 662.6,228.7 663.6,228.2 664.5,228.5 665.5,230.2 666.4,228.0 667.3,228.8 668.3,228.4 669.2,227.8 670.2,229.8 671.1,230.7 672.1,229.4 673.0,229.8 674.0,229.7 674.9,228.8 675.9,228.6 676.8,228.8 677.7,229.4 678.7,229.8 679.6,229.6 680.6,228.9 681.5,229.4 682.5,229.5 683.4,229.1 684.4,229.5 685.3,229.2 686.3,229.4 687.2,229.3 688.1,229.2 689.1,229.4 690.0,229.1 691.0,229.1 691.9,229.2 692.9,229.3 693.8,229.3 694.8,229.4 695.7,229.4 696.7,229.6 697.6,229.4 698.6,229.4 699.5,229.3 700.4,229.1 701.4,228.9 702.3,228.9 703.3,229.0 704.2,229.1 705.2,229.0 706.1,229.1 707.1,229.0 708.0,229.0 709.0,229.0 709.9,228.9 710.8,228.9 711.8,228.9 712.7,229.0 713.7,229.0 714.6,229.0 715.6,229.0 716.5,229.0 717.5,229.0 718.4,229.0 719.4,229.0 720.3,229.0 721.2,229.0 722.2,229.0 723.1,229.0 724.1,229.0 725.0,229.0 726.0,229.0 726.9,229.0 727.9,229.0 728.8,229.0 729.8,229.0 730.7,229.0 731.6,229.0 732.6,229.0 733.5,229.0 734.5,229.0 735.0,229.0" fill="none" stroke="#990099" stroke-width="1.25" stroke-linejoin="round"/>
<line x1="662.50" y1="148" x2="662.50" y2="238" stroke="#ff0000" stroke-width="1"/>
<path d="M551.5,148.5 H557.5 V244 M551.5,238.5 H760.5 V244" fill="none" stroke="#555" stroke-width="1"/>
<line x1="554.5" y1="152.40" x2="557.5" y2="152.40" stroke="#555" stroke-width="1"/>
<text x="551.5" y="156.00" font-size="10" fill="#555" text-anchor="end">0.1</text>
<line x1="554.5" y1="178.06" x2="557.5" y2="178.06" stroke="#555" stroke-width="1"/>
<text x="551.5" y="181.66" font-size="10" fill="#555" text-anchor="end">0.08</text>
<line x1="554.5" y1="203.72" x2="557.5" y2="203.72" stroke="#555" stroke-width="1"/>
<text x="551.5" y="207.32" font-size="10" fill="#555" text-anchor="end">0.06</text>
<line x1="554.5" y1="229.38" x2="557.5" y2="229.38" stroke="#555" stroke-width="1"/>
<text x="551.5" y="232.98" font-size="10" fill="#555" text-anchor="end">0.04</text>
<line x1="566.50" y1="238" x2="566.50" y2="241" stroke="#555" stroke-width="1"/>
<text x="566.50" y="250.7" font-size="10" fill="#555" text-anchor="middle">0</text>
<line x1="613.50" y1="238" x2="613.50" y2="241" stroke="#555" stroke-width="1"/>
<text x="613.50" y="250.7" font-size="10" fill="#555" text-anchor="middle">100</text>
<line x1="660.50" y1="238" x2="660.50" y2="241" stroke="#555" stroke-width="1"/>
<text x="660.50" y="250.7" font-size="10" fill="#555" text-anchor="middle">200</text>
<line x1="708.50" y1="238" x2="708.50" y2="241" stroke="#555" stroke-width="1"/>
<text x="708.50" y="250.7" font-size="10" fill="#555" text-anchor="middle">300</text>
<line x1="755.50" y1="238" x2="755.50" y2="241" stroke="#555" stroke-width="1"/>
<text x="755.50" y="250.7" font-size="10" fill="#555" text-anchor="middle">400</text>
<text x="658.5" y="133.5" font-size="13" fill="#333" text-anchor="middle">Cl<tspan font-size="10.5" dy="7">pop</tspan></text>
<rect x="52" y="288" width="201.5" height="87.5" fill="#fbfbfd"/>
<line x1="52" y1="291.80" x2="253" y2="291.80" stroke="#e6e6e8" stroke-width="1.4"/>
<line x1="52" y1="330.20" x2="253" y2="330.20" stroke="#e6e6e8" stroke-width="1.4"/>
<line x1="52" y1="368.60" x2="253" y2="368.60" stroke="#e6e6e8" stroke-width="1.4"/>
<line x1="59.50" y1="288" x2="59.50" y2="375.5" stroke="#d4d4d6" stroke-width="1"/>
<line x1="106.50" y1="288" x2="106.50" y2="375.5" stroke="#d4d4d6" stroke-width="1"/>
<line x1="154.50" y1="288" x2="154.50" y2="375.5" stroke="#d4d4d6" stroke-width="1"/>
<line x1="201.50" y1="288" x2="201.50" y2="375.5" stroke="#d4d4d6" stroke-width="1"/>
<line x1="248.50" y1="288" x2="248.50" y2="375.5" stroke="#d4d4d6" stroke-width="1"/>
<polyline points="59.5,291.8 60.0,295.3 60.4,298.8 60.9,300.8 61.4,307.4 61.9,310.3 62.3,312.5 62.8,318.2 63.3,316.7 63.8,319.9 64.2,327.5 64.7,327.3 65.2,336.3 65.6,336.1 66.1,339.5 66.6,343.6 67.1,348.3 67.5,350.1 68.0,352.8 68.5,359.9 69.0,362.4 69.4,362.1 69.9,367.7 70.8,357.5 72.3,360.7 73.7,361.3 75.1,350.4 76.5,361.1 77.9,351.8 79.4,352.1 80.8,350.1 82.2,356.9 83.6,355.9 85.0,365.5 86.4,355.5 87.9,354.3 89.3,358.9 90.7,360.6 92.1,359.4 93.5,349.2 95.0,357.8 96.4,366.7 97.8,367.3 99.2,357.6 100.6,360.1 102.1,352.1 103.5,356.4 104.9,360.2 106.3,361.9 107.7,361.5 109.1,348.3 110.6,363.6 112.0,354.0 113.4,347.4 114.8,357.9 116.2,357.0 117.7,352.6 119.1,354.2 120.5,345.7 121.9,361.1 123.3,358.5 124.7,347.8 126.2,353.6 127.6,353.8 129.0,357.9 130.4,353.1 131.8,370.0 133.3,340.9 134.7,346.4 136.1,344.7 137.5,356.3 138.9,346.2 140.3,355.4 141.8,367.1 143.2,353.1 144.6,357.8 146.0,351.8 147.4,366.6 148.9,350.9 150.3,348.3 151.7,346.5 153.1,357.4 154.5,360.5 156.0,361.3 157.4,351.0 158.8,357.3 160.2,346.7 161.6,355.0 163.0,355.6 164.5,356.3 165.9,359.1 167.3,353.8 168.7,355.9 170.1,354.5 171.6,355.1 173.0,357.6 174.4,357.8 175.8,360.9 177.2,360.3 178.6,359.0 180.1,360.2 181.5,359.4 182.9,359.0 184.3,356.6 185.7,357.5 187.2,357.0 188.6,358.7 190.0,358.7 191.4,358.8 192.8,358.6 194.2,357.9 195.7,358.1 197.1,357.4 198.5,356.8 199.9,356.6 201.3,356.7 202.8,356.7 204.2,356.7 205.6,356.7 207.0,356.7 208.4,356.8 209.9,357.0 211.3,357.0 212.7,357.0 214.1,357.0 215.5,357.0 216.9,357.0 218.4,356.9 219.8,357.0 221.2,357.1 222.6,357.0 224.0,357.1 225.5,357.1 226.9,357.1 228.3,357.1 229.7,357.1 231.1,357.1 232.5,357.1 233.0,357.1" fill="none" stroke="#3366cc" stroke-width="1.25" stroke-linejoin="round"/>
<polyline points="59.5,291.8 60.0,295.3 60.4,298.8 60.9,302.9 61.4,320.1 61.9,323.2 62.3,328.5 62.8,328.7 63.3,330.4 63.8,325.5 64.2,321.7 64.7,322.3 65.2,315.6 65.6,313.1 66.1,309.3 66.6,310.1 67.1,305.9 67.5,316.7 68.0,321.9 68.5,331.2 69.0,341.4 69.4,348.2 69.9,362.8 70.8,350.6 72.3,357.6 73.7,372.1 75.1,347.7 76.5,347.7 77.9,355.3 79.4,341.0 80.8,371.0 82.2,364.4 83.6,355.9 85.0,362.4 86.4,358.6 87.9,347.5 89.3,349.6 90.7,352.5 92.1,363.5 93.5,354.1 95.0,348.3 96.4,356.0 97.8,354.5 99.2,349.6 100.6,354.4 102.1,364.1 103.5,357.1 104.9,349.6 106.3,354.0 107.7,355.0 109.1,341.9 110.6,361.8 112.0,364.7 113.4,359.4 114.8,345.1 116.2,354.2 117.7,346.1 119.1,353.1 120.5,350.3 121.9,350.2 123.3,357.9 124.7,348.8 126.2,349.0 127.6,356.8 129.0,354.7 130.4,347.8 131.8,352.0 133.3,348.3 134.7,355.6 136.1,364.5 137.5,357.0 138.9,345.3 140.3,358.5 141.8,350.9 143.2,353.5 144.6,360.7 146.0,362.0 147.4,362.0 148.9,356.3 150.3,336.0 151.7,354.2 153.1,358.4 154.5,357.2 156.0,352.7 157.4,355.3 158.8,348.9 160.2,355.5 161.6,352.8 163.0,348.2 164.5,342.5 165.9,346.9 167.3,351.6 168.7,352.7 170.1,349.4 171.6,351.4 173.0,352.2 174.4,352.5 175.8,352.6 177.2,350.0 178.6,351.5 180.1,352.5 181.5,356.3 182.9,356.8 184.3,358.2 185.7,359.6 187.2,359.3 188.6,358.9 190.0,358.7 191.4,359.1 192.8,358.7 194.2,358.1 195.7,357.4 197.1,357.3 198.5,357.1 199.9,357.3 201.3,357.2 202.8,357.2 204.2,357.1 205.6,357.0 207.0,356.8 208.4,356.9 209.9,356.9 211.3,356.9 212.7,356.9 214.1,357.0 215.5,356.9 216.9,357.0 218.4,357.0 219.8,357.1 221.2,357.0 222.6,357.0" fill="none" stroke="#dc3912" stroke-width="1.25" stroke-linejoin="round"/>
<polyline points="59.5,291.8 60.0,295.3 60.4,298.8 60.9,300.6 61.4,304.7 61.9,311.7 62.3,316.1 62.8,312.6 63.3,321.8 63.8,322.4 64.2,324.2 64.7,330.2 65.2,339.0 65.6,336.1 66.1,339.8 66.6,345.1 67.1,346.8 67.5,350.0 68.0,356.5 68.5,355.7 69.0,362.3 69.4,365.4 69.9,368.0 70.8,360.4 72.3,351.1 73.7,355.0 75.1,355.0 76.5,356.5 77.9,337.6 79.4,357.8 80.8,362.9 82.2,355.7 83.6,362.8 85.0,343.8 86.4,346.8 87.9,359.7 89.3,359.1 90.7,359.1 92.1,362.0 93.5,353.6 95.0,356.0 96.4,346.9 97.8,363.5 99.2,361.5 100.6,368.5 102.1,358.1 103.5,358.2 104.9,350.9 106.3,362.3 107.7,363.4 109.1,349.2 110.6,360.2 112.0,353.7 113.4,355.2 114.8,364.0 116.2,357.2 117.7,350.8 119.1,351.0 120.5,355.0 121.9,352.2 123.3,353.2 124.7,357.5 126.2,357.0 127.6,338.2 129.0,359.6 130.4,358.2 131.8,350.2 133.3,352.8 134.7,361.3 136.1,357.7 137.5,359.1 138.9,359.0 140.3,357.5 141.8,352.1 143.2,341.8 144.6,362.0 146.0,362.3 147.4,347.6 148.9,357.3 150.3,367.2 151.7,348.3 153.1,359.7 154.5,365.2 156.0,351.7 157.4,361.6 158.8,352.5 160.2,354.0 161.6,358.3 163.0,362.1 164.5,360.7 165.9,364.4 167.3,364.3 168.7,362.7 170.1,360.1 171.6,357.6 173.0,359.1 174.4,362.6 175.8,358.3 177.2,359.9 178.6,357.9 180.1,357.1 181.5,355.2 182.9,358.0 184.3,357.4 185.7,358.6 187.2,358.6 188.6,356.4 190.0,357.3 191.4,357.7 192.8,357.3 194.2,357.0 195.7,356.4 197.1,356.4 198.5,356.3 199.9,356.2 201.3,356.3 202.8,356.3 204.2,356.4 205.6,356.5 207.0,356.6 208.4,356.6 209.9,356.6 211.3,356.8 212.7,356.8 214.1,356.8 215.5,357.0 216.9,357.0 218.4,357.0 219.8,357.0 221.2,357.0 222.6,357.0 224.0,357.0 225.5,357.0 226.9,357.1 228.3,357.0 229.7,357.0 231.1,357.1 232.5,357.1 234.0,357.1 235.4,357.1 236.8,357.1 238.2,357.1 239.6,357.1 241.1,357.1 242.5,357.1 243.4,357.1" fill="none" stroke="#ff9900" stroke-width="1.25" stroke-linejoin="round"/>
<polyline points="59.5,295.6 60.0,299.1 60.4,302.6 60.9,308.2 61.4,308.9 61.9,315.6 62.3,319.4 62.8,323.0 63.3,324.7 63.8,326.5 64.2,331.0 64.7,338.6 65.2,335.9 65.6,342.5 66.1,344.1 66.6,344.3 67.1,346.6 67.5,352.4 68.0,360.2 68.5,363.7 69.0,363.6 69.4,366.2 69.9,372.6 70.8,349.3 72.3,353.3 73.7,359.3 75.1,351.9 76.5,358.6 77.9,358.4 79.4,356.8 80.8,350.8 82.2,351.4 83.6,350.0 85.0,355.5 86.4,350.2 87.9,355.7 89.3,358.7 90.7,355.3 92.1,349.3 93.5,360.3 95.0,352.9 96.4,363.0 97.8,349.7 99.2,350.6 100.6,342.7 102.1,357.1 103.5,360.8 104.9,353.5 106.3,343.5 107.7,359.1 109.1,364.4 110.6,359.3 112.0,359.2 113.4,344.2 114.8,355.4 116.2,338.8 117.7,350.2 119.1,353.9 120.5,351.6 121.9,347.8 123.3,349.8 124.7,358.5 126.2,350.3 127.6,359.4 129.0,355.5 130.4,355.0 131.8,356.8 133.3,353.6 134.7,363.9 136.1,364.0 137.5,351.6 138.9,355.2 140.3,356.2 141.8,360.3 143.2,352.6 144.6,355.3 146.0,350.6 147.4,357.3 148.9,360.3 150.3,362.4 151.7,353.8 153.1,354.4 154.5,356.4 156.0,353.3 157.4,346.7 158.8,357.5 160.2,349.4 161.6,345.7 163.0,348.9 164.5,361.4 165.9,351.4 167.3,346.7 168.7,348.9 170.1,349.6 171.6,352.5 173.0,355.8 174.4,352.1 175.8,353.9 177.2,352.3 178.6,357.6 180.1,357.8 181.5,358.9 182.9,357.2 184.3,358.2 185.7,356.1 187.2,354.9 188.6,356.2 190.0,355.8 191.4,356.1 192.8,356.7 194.2,357.0 195.7,357.1 197.1,357.1 198.5,356.7 199.9,356.6 201.3,356.8 202.8,356.7 204.2,356.8 205.6,357.0 207.0,356.9 208.4,356.9 209.9,357.0 211.3,356.9 212.7,356.9 214.1,356.9 215.5,357.0 216.9,357.1 218.4,357.1 219.8,357.0 220.3,357.0" fill="none" stroke="#109618" stroke-width="1.25" stroke-linejoin="round"/>
<polyline points="59.5,291.8 60.0,295.3 60.4,298.8 60.9,300.9 61.4,307.1 61.9,308.2 62.3,312.4 62.8,316.5 63.3,320.0 63.8,325.5 64.2,326.8 64.7,330.1 65.2,332.1 65.6,335.8 66.1,339.1 66.6,345.0 67.1,349.9 67.5,352.4 68.0,355.3 68.5,355.7 69.0,359.4 69.4,363.1 69.9,370.0 70.8,357.9 72.3,349.0 73.7,350.9 75.1,354.6 76.5,359.1 77.9,352.2 79.4,353.7 80.8,361.7 82.2,358.1 83.6,353.3 85.0,361.2 86.4,359.9 87.9,358.7 89.3,358.4 90.7,350.5 92.1,362.8 93.5,367.4 95.0,359.9 96.4,358.4 97.8,349.7 99.2,364.5 100.6,351.8 102.1,355.2 103.5,350.0 104.9,355.9 106.3,346.0 107.7,362.3 109.1,361.0 110.6,355.3 112.0,356.6 113.4,351.9 114.8,349.1 116.2,357.9 117.7,354.4 119.1,354.3 120.5,348.8 121.9,353.9 123.3,352.2 124.7,353.0 126.2,369.6 127.6,351.9 129.0,354.2 130.4,362.5 131.8,355.8 133.3,347.5 134.7,350.0 136.1,350.7 137.5,355.7 138.9,358.4 140.3,358.3 141.8,358.7 143.2,350.1 144.6,357.4 146.0,349.4 147.4,358.2 148.9,353.3 150.3,351.3 151.7,351.7 153.1,362.0 154.5,337.6 156.0,332.3 157.4,339.4 158.8,358.8 160.2,343.6 161.6,346.9 163.0,342.6 164.5,347.3 165.9,342.5 167.3,348.1 168.7,345.4 170.1,352.4 171.6,351.9 173.0,351.0 174.4,351.4 175.8,355.5 177.2,353.9 178.6,353.6 180.1,352.8 181.5,356.8 182.9,356.1 184.3,355.7 185.7,357.1 187.2,356.8 188.6,357.4 190.0,358.4 191.4,358.3 192.8,357.3 194.2,357.2 195.7,357.3 197.1,357.1 198.5,357.0 199.9,357.6 201.3,357.8 202.8,357.5 204.2,357.5 205.6,357.3 207.0,357.0 208.4,357.0 209.9,357.0 211.3,357.0 212.7,357.1 214.1,357.0 215.5,357.0 216.9,357.0 218.4,357.0 219.8,357.1 221.2,357.0 222.6,357.1 224.0,357.1 225.5,357.0 226.9,357.1 228.3,357.1" fill="none" stroke="#990099" stroke-width="1.25" stroke-linejoin="round"/>
<line x1="156.50" y1="288" x2="156.50" y2="377" stroke="#ff0000" stroke-width="1"/>
<path d="M44.5,288.5 H50.5 V383 M44.5,377.5 H253.5 V383" fill="none" stroke="#555" stroke-width="1"/>
<line x1="47.5" y1="291.80" x2="50.5" y2="291.80" stroke="#555" stroke-width="1"/>
<text x="44.5" y="295.40" font-size="10" fill="#555" text-anchor="end">1</text>
<line x1="47.5" y1="330.20" x2="50.5" y2="330.20" stroke="#555" stroke-width="1"/>
<text x="44.5" y="333.80" font-size="10" fill="#555" text-anchor="end">0.8</text>
<line x1="47.5" y1="368.60" x2="50.5" y2="368.60" stroke="#555" stroke-width="1"/>
<text x="44.5" y="372.20" font-size="10" fill="#555" text-anchor="end">0.6</text>
<line x1="59.50" y1="377" x2="59.50" y2="380" stroke="#555" stroke-width="1"/>
<text x="59.50" y="389.7" font-size="10" fill="#555" text-anchor="middle">0</text>
<line x1="106.50" y1="377" x2="106.50" y2="380" stroke="#555" stroke-width="1"/>
<text x="106.50" y="389.7" font-size="10" fill="#555" text-anchor="middle">100</text>
<line x1="154.50" y1="377" x2="154.50" y2="380" stroke="#555" stroke-width="1"/>
<text x="154.50" y="389.7" font-size="10" fill="#555" text-anchor="middle">200</text>
<line x1="201.50" y1="377" x2="201.50" y2="380" stroke="#555" stroke-width="1"/>
<text x="201.50" y="389.7" font-size="10" fill="#555" text-anchor="middle">300</text>
<line x1="248.50" y1="377" x2="248.50" y2="380" stroke="#555" stroke-width="1"/>
<text x="248.50" y="389.7" font-size="10" fill="#555" text-anchor="middle">400</text>
<text x="151.5" y="273.2" font-size="13" fill="#333" text-anchor="middle">ω<tspan font-size="10.5" dy="7">ka</tspan></text>
<rect x="305" y="288" width="202.5" height="87.5" fill="#fbfbfd"/>
<line x1="305" y1="292.00" x2="507" y2="292.00" stroke="#e6e6e8" stroke-width="1.4"/>
<line x1="305" y1="337.60" x2="507" y2="337.60" stroke="#e6e6e8" stroke-width="1.4"/>
<line x1="312.50" y1="288" x2="312.50" y2="375.5" stroke="#d4d4d6" stroke-width="1"/>
<line x1="360.50" y1="288" x2="360.50" y2="375.5" stroke="#d4d4d6" stroke-width="1"/>
<line x1="407.50" y1="288" x2="407.50" y2="375.5" stroke="#d4d4d6" stroke-width="1"/>
<line x1="454.50" y1="288" x2="454.50" y2="375.5" stroke="#d4d4d6" stroke-width="1"/>
<line x1="501.50" y1="288" x2="501.50" y2="375.5" stroke="#d4d4d6" stroke-width="1"/>
<polyline points="312.8,292.0 313.8,296.6 314.7,300.9 315.7,305.0 316.6,308.9 317.6,312.6 318.5,316.1 319.5,319.5 320.4,322.7 321.3,325.7 322.3,328.6 323.2,331.3 324.2,333.9 325.1,336.4 326.1,338.7 327.0,340.9 328.0,343.0 328.9,345.0 329.9,346.9 330.8,348.8 331.7,350.5 332.7,352.1 333.6,353.7 334.6,355.1 335.5,356.5 336.5,357.9 337.4,359.1 338.4,360.3 339.3,361.5 340.3,362.6 341.2,363.6 342.1,364.6 343.1,365.5 344.0,366.4 345.0,367.2 345.9,368.0 346.9,368.8 347.8,369.5 348.8,369.8 349.7,370.1 350.7,370.6 351.6,368.1 352.5,369.4 353.5,368.5 354.4,369.8 355.4,370.0 356.3,370.6 357.3,369.2 358.2,370.6 359.2,369.2 360.1,368.6 361.1,369.9 362.0,369.2 362.9,370.2 363.9,369.4 364.8,370.0 365.8,369.9 366.7,371.0 367.7,370.5 368.6,370.9 369.6,369.3 370.5,370.0 371.5,368.8 372.4,370.5 373.4,370.3 374.3,370.9 375.2,371.1 376.2,369.8 377.1,370.5 378.1,371.5 379.0,369.6 380.0,370.7 380.9,370.3 381.9,370.7 382.8,369.0 383.8,368.9 384.7,369.4 385.6,369.0 386.6,369.4 387.5,370.1 388.5,369.2 389.4,369.0 390.4,370.1 391.3,370.1 392.3,370.1 393.2,370.3 394.2,371.1 395.1,369.5 396.0,370.0 397.0,369.5 397.9,370.2 398.9,370.2 399.8,368.5 400.8,369.0 401.7,370.0 402.7,370.2 403.6,369.6 404.6,370.2 405.5,371.9 406.4,368.9 407.4,370.6 408.3,370.3 409.3,371.5 410.2,371.1 411.2,371.1 412.1,371.2 413.1,370.6 414.0,371.1 415.0,370.5 415.9,370.4 416.8,371.0 417.8,370.9 418.7,371.0 419.7,371.4 420.6,370.9 421.6,371.5 422.5,371.3 423.5,371.1 424.4,371.1 425.4,371.4 426.3,371.5 427.3,371.4 428.2,371.3 429.1,371.1 430.1,371.0 431.0,371.1 432.0,371.1 432.9,371.2 433.9,371.3 434.8,371.4 435.8,371.5 436.7,371.7 437.7,371.6 438.6,371.6 439.5,371.6 440.5,371.7 441.4,371.7 442.4,371.6 443.3,371.6 444.3,371.7 445.2,371.6 446.2,371.7 447.1,371.7 448.1,371.7 449.0,371.6 449.9,371.6 450.9,371.7 451.8,371.7 452.8,371.7 453.7,371.7 454.7,371.7 455.6,371.7 456.6,371.7 457.5,371.6 458.5,371.7 459.4,371.7 460.3,371.7 461.3,371.7 462.2,371.7 463.2,371.8 464.1,371.7 465.1,371.7 466.0,371.7 467.0,371.7 467.9,371.7 468.9,371.7 469.8,371.8 470.7,371.8 471.7,371.8 472.6,371.8 473.6,371.8 474.5,371.8 475.5,371.8 476.4,371.8 477.4,371.8 478.3,371.8 479.3,371.8 480.2,371.8 481.1,371.8 482.1,371.8 483.0,371.8 484.0,371.8 484.9,371.8 485.9,371.8 486.4,371.8" fill="none" stroke="#3366cc" stroke-width="1.25" stroke-linejoin="round"/>
<polyline points="312.8,292.0 313.8,296.6 314.7,300.9 315.7,305.0 316.6,308.9 317.6,312.6 318.5,316.1 319.5,319.5 320.4,322.7 321.3,325.7 322.3,328.6 323.2,331.3 324.2,333.9 325.1,336.4 326.1,338.7 327.0,340.9 328.0,343.0 328.9,345.0 329.9,346.9 330.8,348.8 331.7,350.5 332.7,352.1 333.6,353.7 334.6,355.1 335.5,356.5 336.5,357.9 337.4,359.1 338.4,360.3 339.3,361.5 340.3,362.6 341.2,363.6 342.1,364.6 343.1,365.5 344.0,366.4 345.0,367.2 345.9,368.0 346.9,368.8 347.8,369.5 348.8,371.4 349.7,371.4 350.7,370.0 351.6,369.8 352.5,370.3 353.5,369.4 354.4,370.6 355.4,368.4 356.3,369.6 357.3,369.7 358.2,370.4 359.2,370.8 360.1,370.6 361.1,370.4 362.0,368.6 362.9,370.0 363.9,371.4 364.8,369.3 365.8,370.2 366.7,369.3 367.7,369.9 368.6,370.9 369.6,369.8 370.5,368.9 371.5,370.7 372.4,370.0 373.4,370.3 374.3,370.7 375.2,370.1 376.2,369.4 377.1,369.9 378.1,368.7 379.0,368.4 380.0,371.1 380.9,369.8 381.9,369.4 382.8,369.9 383.8,370.3 384.7,369.5 385.6,369.0 386.6,369.2 387.5,368.9 388.5,369.7 389.4,369.9 390.4,370.9 391.3,369.4 392.3,368.7 393.2,370.4 394.2,370.4 395.1,370.5 396.0,370.9 397.0,369.2 397.9,370.0 398.9,369.9 399.8,369.8 400.8,370.0 401.7,371.5 402.7,369.0 403.6,369.9 404.6,371.0 405.5,369.7 406.4,369.3 407.4,369.2 408.3,368.6 409.3,369.9 410.2,370.7 411.2,370.9 412.1,371.3 413.1,370.2 414.0,370.5 415.0,370.1 415.9,371.0 416.8,370.6 417.8,369.9 418.7,370.1 419.7,370.0 420.6,370.2 421.6,370.8 422.5,370.8 423.5,370.3 424.4,370.8 425.4,370.5 426.3,370.8 427.3,371.1 428.2,371.2 429.1,371.2 430.1,371.0 431.0,371.3 432.0,371.4 432.9,371.4 433.9,371.9 434.8,371.9 435.8,372.0 436.7,371.8 437.7,371.8 438.6,371.8 439.5,371.9 440.5,371.8 441.4,371.8 442.4,371.8 443.3,371.7 444.3,371.8 445.2,371.6 446.2,371.7 447.1,371.6 448.1,371.5 449.0,371.5 449.9,371.6 450.9,371.6 451.8,371.6 452.8,371.6 453.7,371.7 454.7,371.7 455.6,371.6 456.6,371.7 457.5,371.6 458.5,371.6 459.4,371.7 460.3,371.7 461.3,371.7 462.2,371.7 463.2,371.7 464.1,371.7 465.1,371.7 466.0,371.7 467.0,371.7 467.9,371.7 468.9,371.7 469.8,371.8 470.7,371.8 471.7,371.8 472.6,371.8 473.6,371.8 474.5,371.8 475.5,371.8 475.9,371.8" fill="none" stroke="#dc3912" stroke-width="1.25" stroke-linejoin="round"/>
<polyline points="312.8,292.0 313.8,296.6 314.7,300.9 315.7,305.0 316.6,308.9 317.6,312.6 318.5,316.1 319.5,319.5 320.4,322.7 321.3,325.7 322.3,328.6 323.2,331.3 324.2,333.9 325.1,336.4 326.1,338.7 327.0,340.9 328.0,343.0 328.9,345.0 329.9,346.9 330.8,348.8 331.7,350.5 332.7,352.1 333.6,353.7 334.6,355.1 335.5,356.5 336.5,357.9 337.4,359.1 338.4,360.3 339.3,361.5 340.3,362.6 341.2,363.6 342.1,364.6 343.1,365.5 344.0,366.4 345.0,367.2 345.9,368.0 346.9,368.8 347.8,369.5 348.8,371.1 349.7,368.5 350.7,369.9 351.6,369.0 352.5,369.2 353.5,369.2 354.4,369.2 355.4,369.2 356.3,369.8 357.3,370.0 358.2,370.3 359.2,371.0 360.1,371.7 361.1,370.3 362.0,369.9 362.9,370.2 363.9,369.9 364.8,370.1 365.8,368.6 366.7,369.6 367.7,369.9 368.6,369.8 369.6,370.3 370.5,369.6 371.5,370.3 372.4,369.7 373.4,370.4 374.3,368.8 375.2,370.0 376.2,369.9 377.1,368.6 378.1,370.4 379.0,369.2 380.0,369.8 380.9,370.1 381.9,370.3 382.8,369.8 383.8,368.3 384.7,369.3 385.6,369.8 386.6,368.9 387.5,368.4 388.5,369.9 389.4,369.5 390.4,370.3 391.3,371.0 392.3,368.7 393.2,370.8 394.2,370.5 395.1,371.3 396.0,371.2 397.0,368.8 397.9,369.7 398.9,370.9 399.8,370.4 400.8,369.6 401.7,370.8 402.7,370.7 403.6,370.7 404.6,369.9 405.5,369.5 406.4,369.7 407.4,369.0 408.3,370.2 409.3,369.4 410.2,370.8 411.2,371.0 412.1,371.9 413.1,370.5 414.0,370.7 415.0,371.0 415.9,370.5 416.8,369.9 417.8,370.8 418.7,370.8 419.7,371.0 420.6,371.1 421.6,371.3 422.5,371.0 423.5,371.1 424.4,370.7 425.4,370.5 426.3,370.8 427.3,370.7 428.2,370.8 429.1,371.2 430.1,371.0 431.0,371.0 432.0,371.1 432.9,371.2 433.9,371.2 434.8,371.0 435.8,371.2 436.7,371.2 437.7,371.3 438.6,371.3 439.5,371.3 440.5,371.4 441.4,371.4 442.4,371.5 443.3,371.5 444.3,371.6 445.2,371.6 446.2,371.5 447.1,371.6 448.1,371.6 449.0,371.6 449.9,371.7 450.9,371.6 451.8,371.7 452.8,371.7 453.7,371.7 454.7,371.7 455.6,371.7 456.6,371.7 457.5,371.7 458.5,371.7 459.4,371.7 460.3,371.7 461.3,371.7 462.2,371.7 463.2,371.7 464.1,371.7 465.1,371.7 466.0,371.7 467.0,371.7 467.9,371.7 468.9,371.7 469.8,371.8 470.7,371.8 471.7,371.8 472.6,371.8 473.6,371.8 474.5,371.8 475.5,371.8 476.4,371.8 477.4,371.8 478.3,371.8 479.3,371.8 480.2,371.8 481.1,371.8 482.1,371.8 483.0,371.8 484.0,371.8 484.9,371.8 485.9,371.8 486.8,371.8 487.8,371.8 488.7,371.8 489.7,371.8 490.6,371.8 491.6,371.8 492.5,371.8 493.4,371.8 494.4,371.8 495.3,371.8 496.3,371.8 496.8,371.8" fill="none" stroke="#ff9900" stroke-width="1.25" stroke-linejoin="round"/>
<polyline points="312.8,292.0 313.8,296.6 314.7,300.9 315.7,305.0 316.6,308.9 317.6,312.6 318.5,316.1 319.5,319.5 320.4,322.7 321.3,325.7 322.3,328.6 323.2,331.3 324.2,333.9 325.1,336.4 326.1,338.7 327.0,340.9 328.0,343.0 328.9,345.0 329.9,346.9 330.8,348.8 331.7,350.5 332.7,352.1 333.6,353.7 334.6,355.1 335.5,356.5 336.5,357.9 337.4,359.1 338.4,360.3 339.3,361.5 340.3,362.6 341.2,363.6 342.1,364.6 343.1,365.5 344.0,366.4 345.0,367.2 345.9,368.0 346.9,368.8 347.8,369.5 348.8,371.1 349.7,370.7 350.7,371.0 351.6,372.2 352.5,369.0 353.5,369.8 354.4,369.7 355.4,368.7 356.3,369.3 357.3,370.5 358.2,371.0 359.2,369.8 360.1,369.9 361.1,369.5 362.0,369.7 362.9,369.6 363.9,368.9 364.8,369.7 365.8,370.2 366.7,369.0 367.7,369.0 368.6,368.6 369.6,371.4 370.5,368.4 371.5,369.5 372.4,369.8 373.4,369.7 374.3,370.8 375.2,369.3 376.2,370.7 377.1,369.9 378.1,369.9 379.0,368.1 380.0,370.3 380.9,370.7 381.9,370.2 382.8,369.8 383.8,371.2 384.7,370.5 385.6,368.3 386.6,369.6 387.5,371.6 388.5,371.9 389.4,370.3 390.4,370.3 391.3,369.8 392.3,369.5 393.2,369.1 394.2,369.6 395.1,371.2 396.0,370.1 397.0,369.5 397.9,370.7 398.9,370.6 399.8,371.5 400.8,370.2 401.7,370.5 402.7,369.9 403.6,370.7 404.6,369.0 405.5,368.8 406.4,369.7 407.4,370.1 408.3,369.7 409.3,368.1 410.2,367.6 411.2,368.7 412.1,368.9 413.1,369.0 414.0,370.7 415.0,369.4 415.9,369.8 416.8,369.6 417.8,369.3 418.7,369.9 419.7,370.2 420.6,369.5 421.6,370.6 422.5,370.6 423.5,370.3 424.4,370.4 425.4,370.7 426.3,370.8 427.3,371.4 428.2,371.1 429.1,371.4 430.1,371.3 431.0,371.4 432.0,371.6 432.9,371.6 433.9,371.7 434.8,371.8 435.8,371.6 436.7,371.5 437.7,371.4 438.6,371.6 439.5,371.4 440.5,371.5 441.4,371.5 442.4,371.5 443.3,371.6 444.3,371.6 445.2,371.6 446.2,371.6 447.1,371.6 448.1,371.6 449.0,371.6 449.9,371.6 450.9,371.6 451.8,371.6 452.8,371.7 453.7,371.7 454.7,371.7 455.6,371.7 456.6,371.7 457.5,371.7 458.5,371.7 459.4,371.7 460.3,371.7 461.3,371.8 462.2,371.8 463.2,371.8 464.1,371.7 465.1,371.7 466.0,371.7 467.0,371.7 467.9,371.8 468.9,371.8 469.8,371.8 470.7,371.8 471.7,371.8 472.6,371.8 473.6,371.8" fill="none" stroke="#109618" stroke-width="1.25" stroke-linejoin="round"/>
<polyline points="312.8,292.0 313.8,296.6 314.7,300.9 315.7,305.0 316.6,308.9 317.6,312.6 318.5,316.1 319.5,319.5 320.4,322.7 321.3,325.7 322.3,328.6 323.2,331.3 324.2,333.9 325.1,336.4 326.1,338.7 327.0,340.9 328.0,343.0 328.9,345.0 329.9,346.9 330.8,348.8 331.7,350.5 332.7,352.1 333.6,353.7 334.6,355.1 335.5,356.5 336.5,357.9 337.4,359.1 338.4,360.3 339.3,361.5 340.3,362.6 341.2,363.6 342.1,364.6 343.1,365.5 344.0,366.4 345.0,367.2 345.9,368.0 346.9,368.8 347.8,369.5 348.8,368.9 349.7,369.3 350.7,370.1 351.6,370.2 352.5,370.2 353.5,369.5 354.4,368.9 355.4,368.0 356.3,369.2 357.3,368.6 358.2,369.1 359.2,371.0 360.1,369.8 361.1,370.2 362.0,370.5 362.9,370.3 363.9,370.0 364.8,369.5 365.8,369.3 366.7,369.4 367.7,369.8 368.6,369.9 369.6,369.3 370.5,370.3 371.5,367.8 372.4,369.7 373.4,370.5 374.3,369.8 375.2,369.9 376.2,370.4 377.1,369.4 378.1,369.0 379.0,369.3 380.0,371.8 380.9,370.7 381.9,370.1 382.8,369.4 383.8,370.1 384.7,369.6 385.6,370.9 386.6,370.3 387.5,369.6 388.5,370.3 389.4,369.2 390.4,369.9 391.3,369.9 392.3,369.1 393.2,371.1 394.2,369.6 395.1,369.3 396.0,370.7 397.0,370.5 397.9,371.5 398.9,369.8 399.8,369.2 400.8,370.4 401.7,370.4 402.7,370.2 403.6,369.7 404.6,369.5 405.5,369.0 406.4,369.0 407.4,370.8 408.3,371.1 409.3,371.7 410.2,370.7 411.2,372.1 412.1,372.3 413.1,372.0 414.0,372.6 415.0,372.5 415.9,372.1 416.8,372.1 417.8,372.8 418.7,372.0 419.7,371.9 420.6,372.3 421.6,372.6 422.5,372.2 423.5,372.3 424.4,372.4 425.4,372.2 426.3,372.2 427.3,372.0 428.2,372.1 429.1,371.9 430.1,371.8 431.0,371.9 432.0,372.0 432.9,372.1 433.9,371.7 434.8,371.8 435.8,371.6 436.7,371.8 437.7,371.7 438.6,371.7 439.5,371.5 440.5,371.7 441.4,371.7 442.4,371.6 443.3,371.6 444.3,371.5 445.2,371.5 446.2,371.6 447.1,371.5 448.1,371.6 449.0,371.6 449.9,371.6 450.9,371.6 451.8,371.7 452.8,371.7 453.7,371.7 454.7,371.7 455.6,371.7 456.6,371.7 457.5,371.7 458.5,371.7 459.4,371.7 460.3,371.7 461.3,371.7 462.2,371.7 463.2,371.7 464.1,371.8 465.1,371.8 466.0,371.7 467.0,371.7 467.9,371.7 468.9,371.7 469.8,371.8 470.7,371.8 471.7,371.8 472.6,371.8 473.6,371.8 474.5,371.8 475.5,371.8 476.4,371.8 477.4,371.8 478.3,371.8 479.3,371.8 480.2,371.8 481.1,371.8 481.6,371.8" fill="none" stroke="#990099" stroke-width="1.25" stroke-linejoin="round"/>
<line x1="409.50" y1="288" x2="409.50" y2="377" stroke="#ff0000" stroke-width="1"/>
<path d="M297.5,288.5 H303.5 V383 M297.5,377.5 H507.5 V383" fill="none" stroke="#555" stroke-width="1"/>
<line x1="300.5" y1="292.00" x2="303.5" y2="292.00" stroke="#555" stroke-width="1"/>
<text x="297.5" y="295.60" font-size="10" fill="#555" text-anchor="end">1</text>
<line x1="300.5" y1="337.60" x2="303.5" y2="337.60" stroke="#555" stroke-width="1"/>
<text x="297.5" y="341.20" font-size="10" fill="#555" text-anchor="end">0.5</text>
<line x1="312.50" y1="377" x2="312.50" y2="380" stroke="#555" stroke-width="1"/>
<text x="312.50" y="389.7" font-size="10" fill="#555" text-anchor="middle">0</text>
<line x1="360.50" y1="377" x2="360.50" y2="380" stroke="#555" stroke-width="1"/>
<text x="360.50" y="389.7" font-size="10" fill="#555" text-anchor="middle">100</text>
<line x1="407.50" y1="377" x2="407.50" y2="380" stroke="#555" stroke-width="1"/>
<text x="407.50" y="389.7" font-size="10" fill="#555" text-anchor="middle">200</text>
<line x1="454.50" y1="377" x2="454.50" y2="380" stroke="#555" stroke-width="1"/>
<text x="454.50" y="389.7" font-size="10" fill="#555" text-anchor="middle">300</text>
<line x1="501.50" y1="377" x2="501.50" y2="380" stroke="#555" stroke-width="1"/>
<text x="501.50" y="389.7" font-size="10" fill="#555" text-anchor="middle">400</text>
<text x="405.0" y="273.2" font-size="13" fill="#333" text-anchor="middle">ω<tspan font-size="10.5" dy="7">V</tspan></text>
<rect x="559" y="288" width="201.5" height="87.5" fill="#fbfbfd"/>
<line x1="559" y1="292.00" x2="760" y2="292.00" stroke="#e6e6e8" stroke-width="1.4"/>
<line x1="559" y1="313.35" x2="760" y2="313.35" stroke="#e6e6e8" stroke-width="1.4"/>
<line x1="559" y1="334.70" x2="760" y2="334.70" stroke="#e6e6e8" stroke-width="1.4"/>
<line x1="559" y1="356.05" x2="760" y2="356.05" stroke="#e6e6e8" stroke-width="1.4"/>
<line x1="559" y1="377.40" x2="760" y2="377.40" stroke="#e6e6e8" stroke-width="1.4"/>
<line x1="566.50" y1="288" x2="566.50" y2="375.5" stroke="#d4d4d6" stroke-width="1"/>
<line x1="613.50" y1="288" x2="613.50" y2="375.5" stroke="#d4d4d6" stroke-width="1"/>
<line x1="660.50" y1="288" x2="660.50" y2="375.5" stroke="#d4d4d6" stroke-width="1"/>
<line x1="708.50" y1="288" x2="708.50" y2="375.5" stroke="#d4d4d6" stroke-width="1"/>
<line x1="755.50" y1="288" x2="755.50" y2="375.5" stroke="#d4d4d6" stroke-width="1"/>
<polyline points="566.2,292.0 567.1,297.3 568.1,302.4 569.0,307.2 569.9,311.8 570.9,316.1 571.8,320.3 572.8,324.2 573.7,327.9 574.7,331.4 575.6,334.8 576.6,338.0 577.5,341.0 578.5,343.9 579.4,346.7 580.4,349.3 581.3,351.7 582.2,354.1 583.2,356.3 584.1,358.4 585.1,360.4 586.0,362.4 587.0,364.2 587.9,365.9 588.9,367.5 589.8,369.1 590.8,369.0 591.7,372.0 592.6,369.2 593.6,369.7 594.5,369.6 595.5,370.1 596.4,369.2 597.4,369.8 598.3,369.7 599.3,370.4 600.2,368.6 601.2,368.3 602.1,367.9 603.0,369.3 604.0,370.0 604.9,369.6 605.9,370.5 606.8,371.1 607.8,371.5 608.7,369.8 609.7,369.7 610.6,368.7 611.6,370.0 612.5,368.6 613.4,369.6 614.4,368.1 615.3,368.3 616.3,369.8 617.2,371.5 618.2,372.1 619.1,369.0 620.1,369.1 621.0,369.4 622.0,369.1 622.9,370.5 623.8,368.9 624.8,370.7 625.7,370.5 626.7,369.8 627.6,369.7 628.6,369.3 629.5,368.8 630.5,370.8 631.4,370.7 632.4,370.5 633.3,369.2 634.3,369.3 635.2,368.0 636.1,369.8 637.1,368.9 638.0,370.6 639.0,367.7 639.9,369.5 640.9,369.5 641.8,368.5 642.8,372.9 643.7,370.2 644.7,370.0 645.6,371.5 646.5,370.4 647.5,372.2 648.4,370.6 649.4,368.1 650.3,370.3 651.3,371.1 652.2,368.7 653.2,368.2 654.1,369.3 655.1,369.4 656.0,370.7 656.9,368.0 657.9,370.5 658.8,367.9 659.8,369.6 660.7,368.4 661.7,368.1 662.6,369.3 663.6,369.5 664.5,369.2 665.5,372.4 666.4,371.4 667.3,372.8 668.3,370.9 669.2,370.8 670.2,369.8 671.1,371.1 672.1,369.8 673.0,369.9 674.0,370.3 674.9,369.8 675.9,369.4 676.8,369.9 677.7,369.5 678.7,369.5 679.6,369.5 680.6,369.3 681.5,369.5 682.5,369.2 683.4,369.1 684.4,369.2 685.3,369.6 686.3,369.7 687.2,369.9 688.1,369.6 689.1,369.7 690.0,369.6 691.0,369.8 691.9,369.8 692.9,369.4 693.8,369.5 694.8,369.3 695.7,369.5 696.7,369.7 697.6,369.6 698.6,369.7 699.5,369.6 700.4,369.6 701.4,369.8 702.3,369.9 703.3,370.0 704.2,370.0 705.2,369.9 706.1,370.1 707.1,370.0 708.0,370.0 709.0,369.9 709.9,369.9 710.8,370.0 711.8,369.9 712.7,369.9 713.7,369.9 714.6,370.0 715.6,370.0 716.5,370.0 717.5,370.0 718.4,369.9 719.4,370.0 720.3,370.0 721.2,369.9 722.2,369.9 723.1,369.9 724.1,369.9 725.0,369.9 726.0,369.9 726.9,369.9 727.9,369.9 728.8,369.9 729.8,369.9 730.7,369.9 731.6,369.9 732.6,369.9 733.5,369.9 734.5,369.9 735.4,369.9 736.4,369.9 737.3,369.9 738.3,369.9 739.2,369.9 739.7,369.9" fill="none" stroke="#3366cc" stroke-width="1.25" stroke-linejoin="round"/>
<polyline points="566.2,292.0 567.1,297.3 568.1,302.4 569.0,307.2 569.9,311.8 570.9,316.1 571.8,320.3 572.8,324.2 573.7,327.9 574.7,331.4 575.6,334.8 576.6,338.0 577.5,341.0 578.5,343.9 579.4,346.7 580.4,349.3 581.3,351.7 582.2,354.1 583.2,356.3 584.1,358.4 585.1,360.4 586.0,362.4 587.0,364.2 587.9,365.9 588.9,367.5 589.8,369.1 590.8,369.7 591.7,368.5 592.6,369.7 593.6,369.8 594.5,369.4 595.5,368.7 596.4,370.0 597.4,369.6 598.3,369.4 599.3,370.4 600.2,369.0 601.2,369.6 602.1,370.6 603.0,368.9 604.0,371.8 604.9,368.6 605.9,369.4 606.8,370.8 607.8,371.5 608.7,370.3 609.7,369.8 610.6,368.6 611.6,368.5 612.5,369.3 613.4,371.9 614.4,369.0 615.3,367.5 616.3,370.5 617.2,370.2 618.2,369.7 619.1,367.6 620.1,369.7 621.0,369.5 622.0,370.1 622.9,369.1 623.8,369.9 624.8,370.4 625.7,369.0 626.7,368.7 627.6,369.6 628.6,369.4 629.5,369.6 630.5,370.1 631.4,369.9 632.4,369.8 633.3,368.5 634.3,371.7 635.2,367.8 636.1,367.7 637.1,367.4 638.0,369.8 639.0,370.3 639.9,369.0 640.9,370.3 641.8,372.9 642.8,370.9 643.7,371.1 644.7,369.5 645.6,369.4 646.5,370.2 647.5,369.4 648.4,367.4 649.4,368.3 650.3,368.3 651.3,369.3 652.2,370.3 653.2,371.7 654.1,369.8 655.1,371.6 656.0,370.0 656.9,368.2 657.9,369.0 658.8,370.4 659.8,369.5 660.7,370.5 661.7,370.2 662.6,369.2 663.6,369.5 664.5,368.2 665.5,368.9 666.4,369.8 667.3,369.8 668.3,369.8 669.2,369.3 670.2,369.3 671.1,369.5 672.1,369.8 673.0,370.8 674.0,370.2 674.9,369.7 675.9,369.7 676.8,370.0 677.7,370.6 678.7,370.1 679.6,370.0 680.6,370.7 681.5,370.8 682.5,370.6 683.4,370.4 684.4,370.0 685.3,370.3 686.3,370.5 687.2,370.6 688.1,370.4 689.1,370.2 690.0,370.3 691.0,369.9 691.9,369.7 692.9,370.0 693.8,370.0 694.8,369.9 695.7,370.1 696.7,369.9 697.6,369.8 698.6,369.6 699.5,369.8 700.4,369.6 701.4,369.7 702.3,369.7 703.3,369.7 704.2,369.6 705.2,369.7 706.1,369.7 707.1,369.7 708.0,369.7 709.0,369.7 709.9,369.6 710.8,369.7 711.8,369.7 712.7,369.7 713.7,369.7 714.6,369.7 715.6,369.7 716.5,369.7 717.5,369.7 718.4,369.7 719.4,369.7 720.3,369.7 721.2,369.7 722.2,369.7 723.1,369.7 724.1,369.7 725.0,369.7 726.0,369.7 726.9,369.7 727.9,369.7 728.8,369.7 729.3,369.7" fill="none" stroke="#dc3912" stroke-width="1.25" stroke-linejoin="round"/>
<polyline points="566.2,292.0 567.1,297.3 568.1,302.4 569.0,307.2 569.9,311.8 570.9,316.1 571.8,320.3 572.8,324.2 573.7,327.9 574.7,331.4 575.6,334.8 576.6,338.0 577.5,341.0 578.5,343.9 579.4,346.7 580.4,349.3 581.3,351.7 582.2,354.1 583.2,356.3 584.1,358.4 585.1,360.4 586.0,362.4 587.0,364.2 587.9,365.9 588.9,367.5 589.8,369.1 590.8,368.0 591.7,369.9 592.6,368.7 593.6,369.5 594.5,369.8 595.5,369.0 596.4,370.6 597.4,371.4 598.3,369.0 599.3,370.5 600.2,369.4 601.2,370.4 602.1,369.7 603.0,371.0 604.0,369.0 604.9,367.6 605.9,369.9 606.8,368.9 607.8,369.8 608.7,368.6 609.7,367.7 610.6,370.8 611.6,371.2 612.5,368.1 613.4,368.6 614.4,370.5 615.3,367.3 616.3,368.5 617.2,371.3 618.2,370.8 619.1,370.0 620.1,368.8 621.0,368.9 622.0,369.6 622.9,370.0 623.8,369.2 624.8,368.2 625.7,370.2 626.7,368.8 627.6,370.4 628.6,371.9 629.5,370.8 630.5,367.8 631.4,370.9 632.4,368.9 633.3,370.8 634.3,368.3 635.2,370.3 636.1,370.6 637.1,370.3 638.0,370.9 639.0,370.5 639.9,368.7 640.9,369.4 641.8,369.3 642.8,369.5 643.7,368.3 644.7,370.5 645.6,369.5 646.5,369.8 647.5,370.0 648.4,368.6 649.4,369.0 650.3,367.0 651.3,368.4 652.2,369.5 653.2,369.7 654.1,371.0 655.1,371.0 656.0,371.0 656.9,370.2 657.9,369.4 658.8,369.0 659.8,371.3 660.7,370.1 661.7,370.3 662.6,369.7 663.6,369.0 664.5,367.3 665.5,368.4 666.4,369.3 667.3,368.0 668.3,367.8 669.2,367.7 670.2,368.6 671.1,368.1 672.1,368.1 673.0,368.6 674.0,368.6 674.9,368.2 675.9,368.7 676.8,369.1 677.7,369.5 678.7,369.3 679.6,369.6 680.6,369.6 681.5,368.7 682.5,369.1 683.4,369.3 684.4,369.8 685.3,369.9 686.3,369.5 687.2,369.6 688.1,369.8 689.1,369.4 690.0,369.3 691.0,369.3 691.9,369.3 692.9,369.3 693.8,369.2 694.8,369.3 695.7,369.0 696.7,369.1 697.6,369.1 698.6,369.1 699.5,368.9 700.4,369.0 701.4,369.0 702.3,369.0 703.3,369.0 704.2,369.0 705.2,369.1 706.1,369.1 707.1,369.0 708.0,369.1 709.0,369.1 709.9,369.0 710.8,369.0 711.8,369.1 712.7,369.0 713.7,369.1 714.6,369.1 715.6,369.1 716.5,369.1 717.5,369.1 718.4,369.1 719.4,369.1 720.3,369.1 721.2,369.1 722.2,369.1 723.1,369.1 724.1,369.1 725.0,369.1 726.0,369.1 726.9,369.1 727.9,369.1 728.8,369.1 729.8,369.1 730.7,369.1 731.6,369.1 732.6,369.1 733.5,369.1 734.5,369.1 735.4,369.1 736.4,369.1 737.3,369.1 738.3,369.1 739.2,369.1 740.2,369.1 741.1,369.1 742.0,369.1 743.0,369.1 743.9,369.1 744.9,369.1 745.8,369.1 746.8,369.1 747.7,369.1 748.7,369.1 749.6,369.1 750.1,369.1" fill="none" stroke="#ff9900" stroke-width="1.25" stroke-linejoin="round"/>
<polyline points="566.2,292.0 567.1,297.3 568.1,302.4 569.0,307.2 569.9,311.8 570.9,316.1 571.8,320.3 572.8,324.2 573.7,327.9 574.7,331.4 575.6,334.8 576.6,338.0 577.5,341.0 578.5,343.9 579.4,346.7 580.4,349.3 581.3,351.7 582.2,354.1 583.2,356.3 584.1,358.4 585.1,360.4 586.0,362.4 587.0,364.2 587.9,365.9 588.9,367.5 589.8,369.1 590.8,369.5 591.7,371.1 592.6,370.1 593.6,368.2 594.5,368.6 595.5,367.2 596.4,370.7 597.4,369.5 598.3,370.1 599.3,370.0 600.2,370.5 601.2,370.4 602.1,370.7 603.0,369.4 604.0,366.9 604.9,369.0 605.9,369.7 606.8,367.3 607.8,368.4 608.7,371.2 609.7,368.6 610.6,369.7 611.6,369.6 612.5,370.3 613.4,369.2 614.4,369.2 615.3,368.8 616.3,370.0 617.2,373.5 618.2,371.8 619.1,370.5 620.1,372.3 621.0,369.4 622.0,370.0 622.9,370.1 623.8,370.0 624.8,370.9 625.7,370.8 626.7,370.7 627.6,370.6 628.6,367.9 629.5,370.0 630.5,370.4 631.4,370.5 632.4,369.1 633.3,369.1 634.3,366.9 635.2,370.5 636.1,370.1 637.1,371.5 638.0,368.7 639.0,369.7 639.9,369.6 640.9,371.2 641.8,368.3 642.8,367.0 643.7,367.5 644.7,369.6 645.6,368.9 646.5,369.4 647.5,368.5 648.4,371.1 649.4,369.9 650.3,369.8 651.3,370.1 652.2,370.7 653.2,369.5 654.1,371.2 655.1,369.0 656.0,370.1 656.9,370.0 657.9,369.6 658.8,370.2 659.8,369.3 660.7,369.7 661.7,368.4 662.6,372.2 663.6,369.0 664.5,369.8 665.5,369.5 666.4,370.3 667.3,370.5 668.3,370.3 669.2,371.5 670.2,370.2 671.1,369.8 672.1,370.6 673.0,370.2 674.0,369.4 674.9,370.3 675.9,369.9 676.8,370.5 677.7,370.7 678.7,369.4 679.6,370.6 680.6,370.4 681.5,369.4 682.5,369.4 683.4,369.7 684.4,369.6 685.3,369.4 686.3,369.3 687.2,369.6 688.1,370.0 689.1,370.0 690.0,369.9 691.0,369.6 691.9,369.8 692.9,369.4 693.8,369.5 694.8,369.4 695.7,369.4 696.7,369.6 697.6,369.5 698.6,369.5 699.5,369.3 700.4,369.6 701.4,369.6 702.3,369.6 703.3,369.7 704.2,369.7 705.2,369.7 706.1,369.7 707.1,369.6 708.0,369.6 709.0,369.7 709.9,369.6 710.8,369.7 711.8,369.7 712.7,369.7 713.7,369.7 714.6,369.7 715.6,369.7 716.5,369.7 717.5,369.7 718.4,369.7 719.4,369.7 720.3,369.7 721.2,369.7 722.2,369.7 723.1,369.7 724.1,369.7 725.0,369.7 726.0,369.7 726.9,369.7" fill="none" stroke="#109618" stroke-width="1.25" stroke-linejoin="round"/>
<polyline points="566.2,292.0 567.1,297.3 568.1,302.4 569.0,307.2 569.9,311.8 570.9,316.1 571.8,320.3 572.8,324.2 573.7,327.9 574.7,331.4 575.6,334.8 576.6,338.0 577.5,341.0 578.5,343.9 579.4,346.7 580.4,349.3 581.3,351.7 582.2,354.1 583.2,356.3 584.1,358.4 585.1,360.4 586.0,362.4 587.0,364.2 587.9,365.9 588.9,367.5 589.8,369.1 590.8,369.6 591.7,370.3 592.6,370.3 593.6,368.0 594.5,368.0 595.5,369.2 596.4,370.5 597.4,369.5 598.3,368.0 599.3,368.6 600.2,372.1 601.2,368.4 602.1,369.6 603.0,368.2 604.0,371.3 604.9,369.7 605.9,368.8 606.8,370.8 607.8,371.8 608.7,369.9 609.7,370.0 610.6,371.1 611.6,371.9 612.5,369.1 613.4,369.7 614.4,368.1 615.3,371.7 616.3,371.1 617.2,369.9 618.2,369.7 619.1,370.8 620.1,369.8 621.0,369.0 622.0,370.7 622.9,369.1 623.8,369.5 624.8,371.1 625.7,371.4 626.7,369.4 627.6,367.6 628.6,370.1 629.5,371.1 630.5,370.4 631.4,368.9 632.4,370.0 633.3,368.9 634.3,371.3 635.2,369.3 636.1,370.5 637.1,369.0 638.0,369.2 639.0,368.7 639.9,370.4 640.9,369.6 641.8,368.1 642.8,369.9 643.7,368.8 644.7,372.7 645.6,369.5 646.5,369.2 647.5,370.2 648.4,371.4 649.4,370.3 650.3,369.3 651.3,370.2 652.2,368.6 653.2,369.2 654.1,371.2 655.1,369.0 656.0,368.5 656.9,368.2 657.9,369.6 658.8,371.1 659.8,372.9 660.7,369.8 661.7,369.1 662.6,370.4 663.6,370.1 664.5,370.0 665.5,371.0 666.4,369.5 667.3,369.6 668.3,370.1 669.2,369.9 670.2,371.1 671.1,370.8 672.1,369.9 673.0,370.5 674.0,370.9 674.9,370.8 675.9,369.9 676.8,370.6 677.7,369.4 678.7,369.7 679.6,369.4 680.6,369.3 681.5,369.4 682.5,369.0 683.4,368.7 684.4,369.2 685.3,369.7 686.3,369.6 687.2,369.8 688.1,369.5 689.1,369.6 690.0,369.7 691.0,369.5 691.9,369.8 692.9,369.7 693.8,369.7 694.8,369.5 695.7,369.6 696.7,369.6 697.6,369.5 698.6,369.7 699.5,369.8 700.4,369.9 701.4,369.9 702.3,369.8 703.3,369.8 704.2,369.9 705.2,369.8 706.1,369.9 707.1,369.9 708.0,369.9 709.0,370.0 709.9,369.9 710.8,369.9 711.8,369.9 712.7,369.9 713.7,369.9 714.6,369.9 715.6,369.9 716.5,369.9 717.5,369.9 718.4,370.0 719.4,370.0 720.3,370.0 721.2,370.0 722.2,370.0 723.1,369.9 724.1,369.9 725.0,369.9 726.0,369.9 726.9,369.9 727.9,369.9 728.8,369.9 729.8,369.9 730.7,369.9 731.6,369.9 732.6,369.9 733.5,369.9 734.5,369.9 735.0,369.9" fill="none" stroke="#990099" stroke-width="1.25" stroke-linejoin="round"/>
<line x1="662.50" y1="288" x2="662.50" y2="377" stroke="#ff0000" stroke-width="1"/>
<path d="M551.5,288.5 H557.5 V383 M551.5,377.5 H760.5 V383" fill="none" stroke="#555" stroke-width="1"/>
<line x1="554.5" y1="292.00" x2="557.5" y2="292.00" stroke="#555" stroke-width="1"/>
<text x="551.5" y="295.60" font-size="10" fill="#555" text-anchor="end">1</text>
<line x1="554.5" y1="313.35" x2="557.5" y2="313.35" stroke="#555" stroke-width="1"/>
<text x="551.5" y="316.95" font-size="10" fill="#555" text-anchor="end">0.8</text>
<line x1="554.5" y1="334.70" x2="557.5" y2="334.70" stroke="#555" stroke-width="1"/>
<text x="551.5" y="338.30" font-size="10" fill="#555" text-anchor="end">0.6</text>
<line x1="554.5" y1="356.05" x2="557.5" y2="356.05" stroke="#555" stroke-width="1"/>
<text x="551.5" y="359.65" font-size="10" fill="#555" text-anchor="end">0.4</text>
<line x1="554.5" y1="377.40" x2="557.5" y2="377.40" stroke="#555" stroke-width="1"/>
<text x="551.5" y="381.00" font-size="10" fill="#555" text-anchor="end">0.2</text>
<line x1="566.50" y1="377" x2="566.50" y2="380" stroke="#555" stroke-width="1"/>
<text x="566.50" y="389.7" font-size="10" fill="#555" text-anchor="middle">0</text>
<line x1="613.50" y1="377" x2="613.50" y2="380" stroke="#555" stroke-width="1"/>
<text x="613.50" y="389.7" font-size="10" fill="#555" text-anchor="middle">100</text>
<line x1="660.50" y1="377" x2="660.50" y2="380" stroke="#555" stroke-width="1"/>
<text x="660.50" y="389.7" font-size="10" fill="#555" text-anchor="middle">200</text>
<line x1="708.50" y1="377" x2="708.50" y2="380" stroke="#555" stroke-width="1"/>
<text x="708.50" y="389.7" font-size="10" fill="#555" text-anchor="middle">300</text>
<line x1="755.50" y1="377" x2="755.50" y2="380" stroke="#555" stroke-width="1"/>
<text x="755.50" y="389.7" font-size="10" fill="#555" text-anchor="middle">400</text>
<text x="658.5" y="273.2" font-size="13" fill="#333" text-anchor="middle">ω<tspan font-size="10.5" dy="7">Cl</tspan></text>
<rect x="52" y="427" width="201.5" height="88.5" fill="#fbfbfd"/>
<line x1="52" y1="431.30" x2="253" y2="431.30" stroke="#e6e6e8" stroke-width="1.4"/>
<line x1="52" y1="454.90" x2="253" y2="454.90" stroke="#e6e6e8" stroke-width="1.4"/>
<line x1="52" y1="478.50" x2="253" y2="478.50" stroke="#e6e6e8" stroke-width="1.4"/>
<line x1="52" y1="502.10" x2="253" y2="502.10" stroke="#e6e6e8" stroke-width="1.4"/>
<line x1="59.50" y1="427" x2="59.50" y2="515.5" stroke="#d4d4d6" stroke-width="1"/>
<line x1="106.50" y1="427" x2="106.50" y2="515.5" stroke="#d4d4d6" stroke-width="1"/>
<line x1="154.50" y1="427" x2="154.50" y2="515.5" stroke="#d4d4d6" stroke-width="1"/>
<line x1="201.50" y1="427" x2="201.50" y2="515.5" stroke="#d4d4d6" stroke-width="1"/>
<line x1="248.50" y1="427" x2="248.50" y2="515.5" stroke="#d4d4d6" stroke-width="1"/>
<polyline points="59.5,431.3 60.0,434.9 60.4,438.6 60.9,442.2 61.4,445.9 61.9,449.5 62.3,453.2 62.8,456.8 63.3,460.5 63.8,464.1 64.2,467.8 64.7,471.4 65.2,475.1 65.6,478.7 66.1,482.4 66.6,486.0 67.1,489.7 67.5,493.3 68.0,497.0 68.5,500.6 69.0,504.2 69.4,507.9 69.9,511.5 70.8,496.8 72.3,491.4 73.7,491.9 75.1,500.0 76.5,506.9 77.9,495.8 79.4,500.8 80.8,500.6 82.2,490.7 83.6,491.9 85.0,494.9 86.4,491.3 87.9,491.6 89.3,501.0 90.7,500.9 92.1,489.8 93.5,496.4 95.0,497.7 96.4,501.0 97.8,495.3 99.2,503.3 100.6,501.6 102.1,502.5 103.5,486.3 104.9,497.4 106.3,503.6 107.7,492.4 109.1,498.1 110.6,500.4 112.0,494.9 113.4,490.3 114.8,502.4 116.2,491.6 117.7,500.8 119.1,498.1 120.5,497.7 121.9,492.9 123.3,507.8 124.7,491.1 126.2,506.2 127.6,491.3 129.0,509.3 130.4,480.2 131.8,498.0 133.3,488.2 134.7,496.1 136.1,487.1 137.5,504.1 138.9,492.1 140.3,488.3 141.8,501.3 143.2,493.9 144.6,491.5 146.0,498.8 147.4,498.2 148.9,502.5 150.3,489.0 151.7,494.4 153.1,506.4 154.5,497.5 156.0,502.8 157.4,499.5 158.8,505.5 160.2,493.9 161.6,508.2 163.0,494.1 164.5,500.3 165.9,495.9 167.3,500.4 168.7,499.5 170.1,496.8 171.6,496.1 173.0,501.9 174.4,497.7 175.8,493.6 177.2,494.1 178.6,496.7 180.1,494.4 181.5,495.8 182.9,495.5 184.3,497.0 185.7,495.3 187.2,495.6 188.6,495.6 190.0,496.3 191.4,495.7 192.8,496.3 194.2,496.0 195.7,496.1 197.1,497.0 198.5,496.9 199.9,496.0 201.3,496.4 202.8,496.1 204.2,496.2 205.6,496.2 207.0,496.0 208.4,496.2 209.9,496.1 211.3,496.2 212.7,496.2 214.1,496.1 215.5,496.2 216.9,496.2 218.4,496.2 219.8,496.2 221.2,496.2 222.6,496.2 224.0,496.2 225.5,496.2 226.9,496.2 228.3,496.2 229.7,496.2 231.1,496.2 232.5,496.2 233.0,496.2" fill="none" stroke="#3366cc" stroke-width="1.25" stroke-linejoin="round"/>
<polyline points="59.5,431.3 60.0,434.9 60.4,438.6 60.9,442.2 61.4,445.9 61.9,449.5 62.3,453.2 62.8,456.8 63.3,460.5 63.8,464.1 64.2,467.8 64.7,471.4 65.2,475.1 65.6,478.7 66.1,482.4 66.6,486.0 67.1,489.7 67.5,493.3 68.0,497.0 68.5,500.6 69.0,504.2 69.4,507.9 69.9,511.5 70.8,490.1 72.3,496.4 73.7,493.1 75.1,502.4 76.5,498.4 77.9,499.0 79.4,504.8 80.8,493.0 82.2,485.8 83.6,494.1 85.0,496.2 86.4,483.6 87.9,499.0 89.3,491.4 90.7,486.7 92.1,497.3 93.5,493.2 95.0,487.7 96.4,506.6 97.8,488.3 99.2,503.6 100.6,498.8 102.1,503.0 103.5,489.9 104.9,505.6 106.3,497.5 107.7,490.4 109.1,495.1 110.6,495.1 112.0,501.3 113.4,490.4 114.8,495.5 116.2,500.5 117.7,495.2 119.1,509.9 120.5,501.0 121.9,500.6 123.3,500.8 124.7,493.3 126.2,499.1 127.6,505.6 129.0,491.5 130.4,504.9 131.8,494.4 133.3,493.8 134.7,496.0 136.1,490.7 137.5,489.0 138.9,501.6 140.3,494.7 141.8,500.6 143.2,490.6 144.6,489.1 146.0,498.6 147.4,489.3 148.9,498.8 150.3,494.6 151.7,495.6 153.1,496.1 154.5,492.7 156.0,493.5 157.4,498.7 158.8,492.9 160.2,491.1 161.6,497.8 163.0,495.9 164.5,499.2 165.9,496.6 167.3,496.3 168.7,492.2 170.1,494.6 171.6,495.0 173.0,492.9 174.4,497.3 175.8,494.9 177.2,497.7 178.6,499.8 180.1,499.6 181.5,501.9 182.9,502.3 184.3,502.4 185.7,501.5 187.2,500.5 188.6,500.2 190.0,499.4 191.4,498.7 192.8,498.5 194.2,498.0 195.7,498.2 197.1,498.3 198.5,498.5 199.9,498.7 201.3,498.8 202.8,498.6 204.2,498.6 205.6,498.4 207.0,498.5 208.4,498.4 209.9,498.3 211.3,498.5 212.7,498.5 214.1,498.5 215.5,498.5 216.9,498.5 218.4,498.5 219.8,498.6 221.2,498.5 222.6,498.5" fill="none" stroke="#dc3912" stroke-width="1.25" stroke-linejoin="round"/>
<polyline points="59.5,431.3 60.0,434.9 60.4,438.6 60.9,442.2 61.4,445.9 61.9,449.5 62.3,453.2 62.8,456.8 63.3,460.5 63.8,464.1 64.2,467.8 64.7,471.4 65.2,475.1 65.6,478.7 66.1,482.4 66.6,486.0 67.1,489.7 67.5,493.3 68.0,497.0 68.5,500.6 69.0,504.2 69.4,507.9 69.9,511.5 70.8,501.0 72.3,501.3 73.7,500.7 75.1,486.5 76.5,498.0 77.9,497.5 79.4,500.2 80.8,494.0 82.2,496.4 83.6,504.5 85.0,509.0 86.4,499.0 87.9,501.7 89.3,498.7 90.7,492.1 92.1,492.9 93.5,501.1 95.0,495.8 96.4,499.9 97.8,501.1 99.2,497.8 100.6,493.1 102.1,498.0 103.5,498.3 104.9,489.8 106.3,499.6 107.7,499.6 109.1,495.6 110.6,495.7 112.0,495.6 113.4,497.2 114.8,498.0 116.2,492.0 117.7,494.6 119.1,489.9 120.5,497.2 121.9,497.9 123.3,499.8 124.7,499.0 126.2,500.8 127.6,484.5 129.0,487.9 130.4,498.2 131.8,495.4 133.3,499.2 134.7,491.6 136.1,487.1 137.5,501.8 138.9,493.8 140.3,501.1 141.8,501.7 143.2,478.8 144.6,499.6 146.0,498.9 147.4,496.7 148.9,495.9 150.3,498.8 151.7,498.9 153.1,497.4 154.5,493.2 156.0,510.1 157.4,498.2 158.8,500.6 160.2,501.8 161.6,499.4 163.0,488.7 164.5,483.7 165.9,494.2 167.3,496.4 168.7,494.3 170.1,495.5 171.6,490.3 173.0,493.6 174.4,492.0 175.8,492.6 177.2,498.0 178.6,500.1 180.1,501.0 181.5,502.1 182.9,504.2 184.3,503.0 185.7,500.7 187.2,500.6 188.6,501.0 190.0,500.7 191.4,501.0 192.8,500.5 194.2,501.2 195.7,500.4 197.1,499.6 198.5,499.5 199.9,499.6 201.3,499.8 202.8,499.5 204.2,499.4 205.6,499.5 207.0,499.5 208.4,499.5 209.9,499.7 211.3,499.8 212.7,499.7 214.1,499.6 215.5,499.7 216.9,499.7 218.4,499.6 219.8,499.7 221.2,499.7 222.6,499.7 224.0,499.7 225.5,499.7 226.9,499.7 228.3,499.7 229.7,499.7 231.1,499.7 232.5,499.7 234.0,499.7 235.4,499.7 236.8,499.7 238.2,499.7 239.6,499.7 241.1,499.7 242.5,499.7 243.4,499.7" fill="none" stroke="#ff9900" stroke-width="1.25" stroke-linejoin="round"/>
<polyline points="59.5,431.3 60.0,434.9 60.4,438.6 60.9,442.2 61.4,445.9 61.9,449.5 62.3,453.2 62.8,456.8 63.3,460.5 63.8,464.1 64.2,467.8 64.7,471.4 65.2,475.1 65.6,478.7 66.1,482.4 66.6,486.0 67.1,489.7 67.5,493.3 68.0,497.0 68.5,500.6 69.0,504.2 69.4,507.9 69.9,511.5 70.8,505.0 72.3,502.7 73.7,496.4 75.1,504.4 76.5,491.5 77.9,505.9 79.4,493.8 80.8,490.1 82.2,494.8 83.6,493.2 85.0,501.5 86.4,503.2 87.9,497.9 89.3,488.6 90.7,511.4 92.1,506.1 93.5,502.3 95.0,495.2 96.4,495.7 97.8,492.0 99.2,502.5 100.6,488.4 102.1,501.0 103.5,497.4 104.9,487.5 106.3,500.5 107.7,499.1 109.1,498.8 110.6,487.3 112.0,489.6 113.4,489.0 114.8,488.7 116.2,495.7 117.7,503.9 119.1,492.0 120.5,502.8 121.9,508.6 123.3,500.3 124.7,506.4 126.2,499.2 127.6,495.8 129.0,493.8 130.4,502.0 131.8,501.4 133.3,488.5 134.7,506.3 136.1,492.3 137.5,497.1 138.9,510.8 140.3,497.0 141.8,497.3 143.2,491.0 144.6,493.9 146.0,496.0 147.4,498.3 148.9,492.8 150.3,492.8 151.7,490.4 153.1,492.3 154.5,497.6 156.0,495.2 157.4,496.7 158.8,498.0 160.2,500.9 161.6,498.8 163.0,504.3 164.5,496.7 165.9,504.2 167.3,499.4 168.7,499.5 170.1,500.2 171.6,500.0 173.0,497.1 174.4,496.4 175.8,495.8 177.2,497.9 178.6,497.9 180.1,497.9 181.5,500.7 182.9,498.5 184.3,498.1 185.7,498.8 187.2,500.1 188.6,499.9 190.0,498.2 191.4,498.4 192.8,497.9 194.2,497.9 195.7,498.7 197.1,498.0 198.5,497.6 199.9,498.3 201.3,498.3 202.8,498.3 204.2,498.5 205.6,498.5 207.0,498.6 208.4,498.6 209.9,498.6 211.3,498.8 212.7,498.7 214.1,498.7 215.5,498.7 216.9,498.6 218.4,498.6 219.8,498.5 220.3,498.6" fill="none" stroke="#109618" stroke-width="1.25" stroke-linejoin="round"/>
<polyline points="59.5,431.3 60.0,434.9 60.4,438.6 60.9,442.2 61.4,445.9 61.9,449.5 62.3,453.2 62.8,456.8 63.3,460.5 63.8,464.1 64.2,467.8 64.7,471.4 65.2,475.1 65.6,478.7 66.1,482.4 66.6,486.0 67.1,489.7 67.5,493.3 68.0,497.0 68.5,500.6 69.0,504.2 69.4,507.9 69.9,511.5 70.8,500.0 72.3,507.8 73.7,496.5 75.1,502.5 76.5,487.9 77.9,506.4 79.4,497.1 80.8,494.7 82.2,494.8 83.6,490.1 85.0,496.5 86.4,496.5 87.9,497.0 89.3,499.6 90.7,494.1 92.1,496.3 93.5,502.4 95.0,495.3 96.4,490.4 97.8,500.2 99.2,498.7 100.6,495.4 102.1,501.9 103.5,487.7 104.9,499.6 106.3,505.3 107.7,494.5 109.1,506.6 110.6,495.2 112.0,494.7 113.4,497.4 114.8,497.2 116.2,494.4 117.7,487.2 119.1,506.6 120.5,494.4 121.9,497.7 123.3,487.1 124.7,500.9 126.2,494.0 127.6,502.4 129.0,504.6 130.4,502.3 131.8,499.5 133.3,498.3 134.7,497.7 136.1,489.2 137.5,495.2 138.9,496.5 140.3,497.4 141.8,498.3 143.2,497.6 144.6,494.4 146.0,493.6 147.4,499.7 148.9,499.2 150.3,490.4 151.7,497.1 153.1,494.9 154.5,494.8 156.0,494.2 157.4,501.7 158.8,497.4 160.2,501.3 161.6,496.3 163.0,497.1 164.5,502.3 165.9,499.6 167.3,495.9 168.7,493.2 170.1,488.0 171.6,493.1 173.0,494.7 174.4,494.5 175.8,495.6 177.2,496.5 178.6,494.1 180.1,495.4 181.5,496.0 182.9,498.1 184.3,497.9 185.7,498.6 187.2,498.5 188.6,498.3 190.0,498.4 191.4,499.3 192.8,499.0 194.2,498.4 195.7,499.5 197.1,499.2 198.5,499.2 199.9,499.1 201.3,499.3 202.8,499.3 204.2,499.3 205.6,499.4 207.0,499.5 208.4,499.6 209.9,499.5 211.3,499.6 212.7,499.6 214.1,499.6 215.5,499.6 216.9,499.7 218.4,499.7 219.8,499.7 221.2,499.7 222.6,499.7 224.0,499.7 225.5,499.7 226.9,499.7 228.3,499.7" fill="none" stroke="#990099" stroke-width="1.25" stroke-linejoin="round"/>
<line x1="156.50" y1="427" x2="156.50" y2="517" stroke="#ff0000" stroke-width="1"/>
<path d="M44.5,427.5 H50.5 V523 M44.5,517.5 H253.5 V523" fill="none" stroke="#555" stroke-width="1"/>
<line x1="47.5" y1="431.30" x2="50.5" y2="431.30" stroke="#555" stroke-width="1"/>
<text x="44.5" y="434.90" font-size="10" fill="#555" text-anchor="end">1</text>
<line x1="47.5" y1="454.90" x2="50.5" y2="454.90" stroke="#555" stroke-width="1"/>
<text x="44.5" y="458.50" font-size="10" fill="#555" text-anchor="end">0.8</text>
<line x1="47.5" y1="478.50" x2="50.5" y2="478.50" stroke="#555" stroke-width="1"/>
<text x="44.5" y="482.10" font-size="10" fill="#555" text-anchor="end">0.6</text>
<line x1="47.5" y1="502.10" x2="50.5" y2="502.10" stroke="#555" stroke-width="1"/>
<text x="44.5" y="505.70" font-size="10" fill="#555" text-anchor="end">0.4</text>
<line x1="59.50" y1="517" x2="59.50" y2="520" stroke="#555" stroke-width="1"/>
<text x="59.50" y="529.7" font-size="10" fill="#555" text-anchor="middle">0</text>
<line x1="106.50" y1="517" x2="106.50" y2="520" stroke="#555" stroke-width="1"/>
<text x="106.50" y="529.7" font-size="10" fill="#555" text-anchor="middle">100</text>
<line x1="154.50" y1="517" x2="154.50" y2="520" stroke="#555" stroke-width="1"/>
<text x="154.50" y="529.7" font-size="10" fill="#555" text-anchor="middle">200</text>
<line x1="201.50" y1="517" x2="201.50" y2="520" stroke="#555" stroke-width="1"/>
<text x="201.50" y="529.7" font-size="10" fill="#555" text-anchor="middle">300</text>
<line x1="248.50" y1="517" x2="248.50" y2="520" stroke="#555" stroke-width="1"/>
<text x="248.50" y="529.7" font-size="10" fill="#555" text-anchor="middle">400</text>
<text x="151.5" y="412.8" font-size="13" fill="#333" text-anchor="middle">a</text>
<rect x="305" y="427" width="202.5" height="88.5" fill="#fbfbfd"/>
<line x1="305" y1="431.40" x2="507" y2="431.40" stroke="#e6e6e8" stroke-width="1.4"/>
<line x1="305" y1="461.90" x2="507" y2="461.90" stroke="#e6e6e8" stroke-width="1.4"/>
<line x1="305" y1="492.40" x2="507" y2="492.40" stroke="#e6e6e8" stroke-width="1.4"/>
<line x1="312.50" y1="427" x2="312.50" y2="515.5" stroke="#d4d4d6" stroke-width="1"/>
<line x1="360.50" y1="427" x2="360.50" y2="515.5" stroke="#d4d4d6" stroke-width="1"/>
<line x1="407.50" y1="427" x2="407.50" y2="515.5" stroke="#d4d4d6" stroke-width="1"/>
<line x1="454.50" y1="427" x2="454.50" y2="515.5" stroke="#d4d4d6" stroke-width="1"/>
<line x1="501.50" y1="427" x2="501.50" y2="515.5" stroke="#d4d4d6" stroke-width="1"/>
<polyline points="312.8,431.4 313.3,436.0 313.8,440.3 314.3,444.5 314.7,448.4 315.2,452.1 315.7,455.6 316.1,459.0 316.6,462.2 317.1,465.2 317.6,468.1 318.0,470.9 318.5,473.5 319.0,475.9 319.5,478.3 319.9,480.5 320.4,482.6 320.9,484.6 321.3,486.6 321.8,488.4 322.3,490.1 322.8,491.7 323.2,493.3 323.7,494.8 324.2,496.2 325.6,509.4 327.0,505.1 328.4,507.9 329.9,505.4 331.3,506.9 332.7,507.8 334.1,505.3 335.5,503.9 336.9,505.9 338.4,509.1 339.8,507.2 341.2,505.8 342.6,500.8 344.0,504.2 345.5,506.5 346.9,505.4 348.3,504.8 349.7,504.3 351.1,506.8 352.5,503.6 354.0,507.3 355.4,505.1 356.8,504.8 358.2,507.8 359.6,507.1 361.1,508.0 362.5,509.2 363.9,508.0 365.3,505.4 366.7,504.3 368.2,504.7 369.6,508.3 371.0,508.1 372.4,502.2 373.8,502.9 375.2,502.9 376.7,502.8 378.1,504.3 379.5,508.4 380.9,505.9 382.3,507.8 383.8,500.8 385.2,505.2 386.6,502.6 388.0,505.8 389.4,509.7 390.8,506.9 392.3,502.9 393.7,500.3 395.1,505.9 396.5,506.7 397.9,506.2 399.4,506.0 400.8,505.7 402.2,502.3 403.6,511.0 405.0,507.1 406.4,503.0 407.9,506.8 409.3,502.1 410.7,505.5 412.1,506.8 413.5,505.6 415.0,502.3 416.4,506.2 417.8,508.5 419.2,508.3 420.6,508.0 422.0,507.9 423.5,506.5 424.9,505.2 426.3,506.3 427.7,505.3 429.1,506.0 430.6,506.1 432.0,506.3 433.4,505.8 434.8,505.9 436.2,506.2 437.7,505.4 439.1,505.6 440.5,505.9 441.9,506.0 443.3,505.7 444.7,505.6 446.2,505.5 447.6,505.5 449.0,505.8 450.4,505.8 451.8,505.6 453.3,505.4 454.7,505.7 456.1,505.7 457.5,505.7 458.9,505.7 460.3,505.8 461.8,505.8 463.2,505.8 464.6,505.8 466.0,505.8 467.4,505.8 468.9,505.8 470.3,505.8 471.7,505.8 473.1,505.8 474.5,505.8 475.9,505.8 477.4,505.8 478.8,505.8 480.2,505.8 481.6,505.8 483.0,505.8 484.5,505.8 485.9,505.8 486.4,505.8" fill="none" stroke="#3366cc" stroke-width="1.25" stroke-linejoin="round"/>
<polyline points="312.8,431.4 313.3,436.0 313.8,440.3 314.3,444.5 314.7,448.4 315.2,452.1 315.7,455.6 316.1,459.0 316.6,462.2 317.1,465.2 317.6,468.1 318.0,470.9 318.5,473.5 319.0,475.9 319.5,478.3 319.9,480.5 320.4,482.6 320.9,484.6 321.3,486.6 321.8,488.4 322.3,490.1 322.8,491.7 323.2,493.3 323.7,494.8 324.2,496.2 325.6,507.2 327.0,504.0 328.4,510.1 329.9,505.3 331.3,502.4 332.7,504.0 334.1,507.8 335.5,505.6 336.9,507.7 338.4,507.2 339.8,509.7 341.2,502.3 342.6,503.1 344.0,505.6 345.5,508.6 346.9,508.5 348.3,506.9 349.7,504.6 351.1,507.8 352.5,507.5 354.0,506.8 355.4,500.1 356.8,505.5 358.2,504.4 359.6,502.9 361.1,504.5 362.5,504.0 363.9,505.1 365.3,503.6 366.7,507.2 368.2,504.9 369.6,502.0 371.0,509.7 372.4,503.8 373.8,503.1 375.2,508.2 376.7,501.9 378.1,508.8 379.5,504.0 380.9,502.6 382.3,506.7 383.8,501.3 385.2,506.1 386.6,508.8 388.0,506.9 389.4,507.3 390.8,508.9 392.3,507.7 393.7,502.0 395.1,508.3 396.5,508.5 397.9,503.0 399.4,507.0 400.8,509.4 402.2,505.5 403.6,504.9 405.0,505.8 406.4,504.6 407.9,506.5 409.3,502.7 410.7,509.3 412.1,504.8 413.5,505.6 415.0,502.5 416.4,506.4 417.8,507.0 419.2,507.4 420.6,505.4 422.0,506.9 423.5,504.7 424.9,504.4 426.3,505.6 427.7,504.5 429.1,504.4 430.6,504.9 432.0,504.4 433.4,505.3 434.8,505.3 436.2,505.1 437.7,505.4 439.1,505.3 440.5,505.1 441.9,504.9 443.3,505.2 444.7,505.2 446.2,505.3 447.6,505.2 449.0,505.1 450.4,504.9 451.8,504.9 453.3,504.7 454.7,504.7 456.1,504.7 457.5,504.6 458.9,504.6 460.3,504.6 461.8,504.6 463.2,504.6 464.6,504.6 466.0,504.6 467.4,504.6 468.9,504.6 470.3,504.6 471.7,504.6 473.1,504.6 474.5,504.6 475.9,504.6" fill="none" stroke="#dc3912" stroke-width="1.25" stroke-linejoin="round"/>
<polyline points="312.8,431.4 313.3,436.0 313.8,440.3 314.3,444.5 314.7,448.4 315.2,452.1 315.7,455.6 316.1,459.0 316.6,462.2 317.1,465.2 317.6,468.1 318.0,470.9 318.5,473.5 319.0,475.9 319.5,478.3 319.9,480.5 320.4,482.6 320.9,484.6 321.3,486.6 321.8,488.4 322.3,490.1 322.8,491.7 323.2,493.3 323.7,494.8 324.2,496.2 325.6,504.8 327.0,505.8 328.4,504.6 329.9,506.3 331.3,505.9 332.7,505.3 334.1,501.0 335.5,508.3 336.9,504.3 338.4,506.9 339.8,510.5 341.2,509.0 342.6,502.7 344.0,501.8 345.5,501.5 346.9,502.9 348.3,509.0 349.7,506.2 351.1,506.7 352.5,507.1 354.0,506.3 355.4,504.4 356.8,503.2 358.2,506.4 359.6,502.2 361.1,503.8 362.5,505.7 363.9,505.4 365.3,503.5 366.7,504.0 368.2,502.6 369.6,506.1 371.0,507.6 372.4,505.3 373.8,504.9 375.2,505.9 376.7,506.5 378.1,504.9 379.5,505.0 380.9,503.3 382.3,505.2 383.8,507.6 385.2,509.2 386.6,510.3 388.0,502.2 389.4,505.9 390.8,502.6 392.3,507.2 393.7,506.5 395.1,510.8 396.5,504.1 397.9,507.6 399.4,501.0 400.8,507.6 402.2,506.0 403.6,503.8 405.0,508.4 406.4,503.1 407.9,508.7 409.3,511.8 410.7,507.8 412.1,506.2 413.5,511.0 415.0,507.1 416.4,507.6 417.8,503.3 419.2,505.8 420.6,505.3 422.0,504.3 423.5,504.2 424.9,505.3 426.3,505.5 427.7,504.8 429.1,505.4 430.6,504.4 432.0,504.8 433.4,504.2 434.8,504.7 436.2,504.4 437.7,504.2 439.1,504.9 440.5,505.1 441.9,504.9 443.3,504.6 444.7,504.9 446.2,504.9 447.6,504.7 449.0,505.0 450.4,504.9 451.8,504.9 453.3,504.8 454.7,504.9 456.1,504.7 457.5,504.7 458.9,504.6 460.3,504.6 461.8,504.7 463.2,504.6 464.6,504.6 466.0,504.6 467.4,504.6 468.9,504.6 470.3,504.6 471.7,504.6 473.1,504.6 474.5,504.6 475.9,504.6 477.4,504.6 478.8,504.6 480.2,504.6 481.6,504.6 483.0,504.6 484.5,504.6 485.9,504.6 487.3,504.6 488.7,504.6 490.1,504.6 491.6,504.6 493.0,504.6 494.4,504.6 495.8,504.6 496.8,504.6" fill="none" stroke="#ff9900" stroke-width="1.25" stroke-linejoin="round"/>
<polyline points="312.8,431.4 313.3,436.0 313.8,440.3 314.3,444.5 314.7,448.4 315.2,452.1 315.7,455.6 316.1,459.0 316.6,462.2 317.1,465.2 317.6,468.1 318.0,470.9 318.5,473.5 319.0,475.9 319.5,478.3 319.9,480.5 320.4,482.6 320.9,484.6 321.3,486.6 321.8,488.4 322.3,490.1 322.8,491.7 323.2,493.3 323.7,494.8 324.2,496.2 325.6,503.9 327.0,504.3 328.4,505.4 329.9,504.9 331.3,505.4 332.7,504.6 334.1,503.2 335.5,501.8 336.9,505.6 338.4,506.6 339.8,504.6 341.2,502.1 342.6,503.1 344.0,509.7 345.5,504.4 346.9,503.0 348.3,504.2 349.7,506.2 351.1,507.5 352.5,511.5 354.0,506.4 355.4,508.5 356.8,502.9 358.2,504.3 359.6,505.0 361.1,504.6 362.5,503.7 363.9,507.7 365.3,503.6 366.7,505.1 368.2,504.7 369.6,507.5 371.0,504.2 372.4,507.2 373.8,506.1 375.2,508.8 376.7,502.6 378.1,504.8 379.5,506.6 380.9,503.3 382.3,504.0 383.8,502.8 385.2,503.9 386.6,506.7 388.0,505.0 389.4,507.7 390.8,504.3 392.3,503.0 393.7,509.6 395.1,506.2 396.5,509.0 397.9,503.6 399.4,507.9 400.8,501.3 402.2,507.2 403.6,508.4 405.0,505.8 406.4,507.7 407.9,506.5 409.3,504.5 410.7,506.4 412.1,503.0 413.5,503.9 415.0,504.2 416.4,508.2 417.8,503.1 419.2,505.0 420.6,504.9 422.0,503.4 423.5,503.9 424.9,504.2 426.3,504.2 427.7,504.8 429.1,504.4 430.6,505.7 432.0,505.6 433.4,506.1 434.8,505.8 436.2,505.9 437.7,506.1 439.1,505.9 440.5,505.5 441.9,504.8 443.3,504.9 444.7,504.9 446.2,505.3 447.6,505.1 449.0,505.0 450.4,505.0 451.8,505.1 453.3,504.9 454.7,505.0 456.1,505.0 457.5,505.0 458.9,505.0 460.3,505.0 461.8,505.0 463.2,504.9 464.6,504.9 466.0,504.9 467.4,504.9 468.9,504.9 470.3,504.9 471.7,504.9 473.1,504.9 473.6,504.9" fill="none" stroke="#109618" stroke-width="1.25" stroke-linejoin="round"/>
<polyline points="312.8,431.4 313.3,436.0 313.8,440.3 314.3,444.5 314.7,448.4 315.2,452.1 315.7,455.6 316.1,459.0 316.6,462.2 317.1,465.2 317.6,468.1 318.0,470.9 318.5,473.5 319.0,475.9 319.5,478.3 319.9,480.5 320.4,482.6 320.9,484.6 321.3,486.6 321.8,488.4 322.3,490.1 322.8,491.7 323.2,493.3 323.7,494.8 324.2,496.2 325.6,507.7 327.0,505.3 328.4,509.9 329.9,507.8 331.3,507.0 332.7,506.1 334.1,507.6 335.5,504.8 336.9,506.2 338.4,509.9 339.8,504.9 341.2,508.6 342.6,505.9 344.0,507.4 345.5,501.6 346.9,507.6 348.3,504.7 349.7,503.4 351.1,503.7 352.5,505.5 354.0,501.6 355.4,501.4 356.8,501.4 358.2,504.8 359.6,502.5 361.1,510.9 362.5,507.5 363.9,503.1 365.3,505.3 366.7,507.1 368.2,507.9 369.6,509.2 371.0,509.6 372.4,506.3 373.8,505.0 375.2,503.0 376.7,502.8 378.1,505.1 379.5,506.5 380.9,504.2 382.3,505.5 383.8,502.1 385.2,507.2 386.6,508.4 388.0,506.2 389.4,506.8 390.8,507.3 392.3,506.7 393.7,505.2 395.1,506.5 396.5,505.4 397.9,502.2 399.4,502.6 400.8,509.6 402.2,504.8 403.6,506.2 405.0,509.0 406.4,505.0 407.9,506.5 409.3,506.5 410.7,505.5 412.1,504.4 413.5,503.6 415.0,502.6 416.4,503.9 417.8,501.4 419.2,502.8 420.6,501.0 422.0,501.6 423.5,504.0 424.9,504.2 426.3,505.5 427.7,504.3 429.1,505.2 430.6,505.8 432.0,505.0 433.4,505.3 434.8,505.4 436.2,505.2 437.7,505.4 439.1,505.3 440.5,505.4 441.9,505.6 443.3,505.1 444.7,504.8 446.2,505.1 447.6,505.2 449.0,505.0 450.4,504.6 451.8,504.7 453.3,504.6 454.7,504.8 456.1,504.7 457.5,504.7 458.9,504.5 460.3,504.6 461.8,504.6 463.2,504.6 464.6,504.6 466.0,504.6 467.4,504.6 468.9,504.6 470.3,504.6 471.7,504.6 473.1,504.6 474.5,504.6 475.9,504.6 477.4,504.6 478.8,504.6 480.2,504.6 481.6,504.6" fill="none" stroke="#990099" stroke-width="1.25" stroke-linejoin="round"/>
<line x1="409.50" y1="427" x2="409.50" y2="517" stroke="#ff0000" stroke-width="1"/>
<path d="M297.5,427.5 H303.5 V523 M297.5,517.5 H507.5 V523" fill="none" stroke="#555" stroke-width="1"/>
<line x1="300.5" y1="431.40" x2="303.5" y2="431.40" stroke="#555" stroke-width="1"/>
<text x="297.5" y="435.00" font-size="10" fill="#555" text-anchor="end">0.3</text>
<line x1="300.5" y1="461.90" x2="303.5" y2="461.90" stroke="#555" stroke-width="1"/>
<text x="297.5" y="465.50" font-size="10" fill="#555" text-anchor="end">0.2</text>
<line x1="300.5" y1="492.40" x2="303.5" y2="492.40" stroke="#555" stroke-width="1"/>
<text x="297.5" y="496.00" font-size="10" fill="#555" text-anchor="end">0.1</text>
<line x1="312.50" y1="517" x2="312.50" y2="520" stroke="#555" stroke-width="1"/>
<text x="312.50" y="529.7" font-size="10" fill="#555" text-anchor="middle">0</text>
<line x1="360.50" y1="517" x2="360.50" y2="520" stroke="#555" stroke-width="1"/>
<text x="360.50" y="529.7" font-size="10" fill="#555" text-anchor="middle">100</text>
<line x1="407.50" y1="517" x2="407.50" y2="520" stroke="#555" stroke-width="1"/>
<text x="407.50" y="529.7" font-size="10" fill="#555" text-anchor="middle">200</text>
<line x1="454.50" y1="517" x2="454.50" y2="520" stroke="#555" stroke-width="1"/>
<text x="454.50" y="529.7" font-size="10" fill="#555" text-anchor="middle">300</text>
<line x1="501.50" y1="517" x2="501.50" y2="520" stroke="#555" stroke-width="1"/>
<text x="501.50" y="529.7" font-size="10" fill="#555" text-anchor="middle">400</text>
<text x="405.0" y="412.8" font-size="13" fill="#333" text-anchor="middle">b</text>
<rect x="559" y="427" width="201.5" height="88.5" fill="#fbfbfd"/>
<line x1="559" y1="449.40" x2="760" y2="449.40" stroke="#e6e6e8" stroke-width="1.4"/>
<line x1="559" y1="476.20" x2="760" y2="476.20" stroke="#e6e6e8" stroke-width="1.4"/>
<line x1="559" y1="503.00" x2="760" y2="503.00" stroke="#e6e6e8" stroke-width="1.4"/>
<line x1="566.50" y1="427" x2="566.50" y2="515.5" stroke="#d4d4d6" stroke-width="1"/>
<line x1="613.50" y1="427" x2="613.50" y2="515.5" stroke="#d4d4d6" stroke-width="1"/>
<line x1="660.50" y1="427" x2="660.50" y2="515.5" stroke="#d4d4d6" stroke-width="1"/>
<line x1="708.50" y1="427" x2="708.50" y2="515.5" stroke="#d4d4d6" stroke-width="1"/>
<line x1="755.50" y1="427" x2="755.50" y2="515.5" stroke="#d4d4d6" stroke-width="1"/>
<polyline points="566.2,432.2 567.1,438.9 568.1,445.5 569.0,452.1 569.9,458.8 570.9,465.4 571.8,472.0 572.8,478.7 573.7,485.3 574.7,490.1 575.6,494.2 576.6,497.6 577.5,500.2 578.5,502.0 579.4,503.2 580.4,503.5 581.3,505.9 582.2,504.3 583.2,507.1 584.1,508.1 585.1,508.3 586.0,509.7 587.0,508.4 587.9,509.4 588.9,509.4 589.8,508.2 590.8,508.8 591.7,507.3 592.6,509.6 593.6,509.9 594.5,508.7 595.5,509.9 596.4,507.8 597.4,510.1 598.3,509.7 599.3,509.0 600.2,510.1 601.2,508.9 602.1,509.4 603.0,509.0 604.0,509.3 604.9,509.4 605.9,509.8 606.8,508.5 607.8,510.3 608.7,510.1 609.7,508.7 610.6,507.1 611.6,508.7 612.5,508.6 613.4,508.0 614.4,508.4 615.3,508.1 616.3,507.4 617.2,509.5 618.2,510.3 619.1,509.3 620.1,509.4 621.0,507.8 622.0,507.8 622.9,508.3 623.8,508.2 624.8,510.4 625.7,510.1 626.7,508.0 627.6,508.8 628.6,509.9 629.5,511.2 630.5,507.6 631.4,510.5 632.4,510.7 633.3,508.6 634.3,510.2 635.2,509.2 636.1,508.9 637.1,509.5 638.0,510.4 639.0,510.3 639.9,509.4 640.9,509.5 641.8,508.8 642.8,507.9 643.7,510.7 644.7,511.8 645.6,509.7 646.5,508.2 647.5,510.3 648.4,510.7 649.4,507.7 650.3,511.1 651.3,508.4 652.2,509.5 653.2,508.1 654.1,508.7 655.1,509.9 656.0,510.5 656.9,509.6 657.9,509.6 658.8,509.8 659.8,511.0 660.7,509.4 661.7,510.2 662.6,510.6 663.6,510.1 664.5,509.4 665.5,510.3 666.4,509.2 667.3,510.2 668.3,508.2 669.2,509.0 670.2,509.2 671.1,508.6 672.1,509.8 673.0,510.6 674.0,508.0 674.9,506.8 675.9,509.6 676.8,509.3 677.7,510.5 678.7,510.3 679.6,509.5 680.6,510.3 681.5,508.8 682.5,510.1 683.4,509.0 684.4,509.7 685.3,509.3 686.3,509.9 687.2,510.2 688.1,508.7 689.1,510.5 690.0,509.9 691.0,509.2 691.9,508.7 692.9,508.8 693.8,507.8 694.8,509.7 695.7,509.9 696.7,509.2 697.6,508.9 698.6,508.4 699.5,510.1 700.4,508.8 701.4,508.7 702.3,510.2 703.3,508.2 704.2,509.5 705.2,509.9 706.1,511.4 707.1,510.7 708.0,509.7 709.0,509.7 709.9,510.0 710.8,508.2 711.8,509.4 712.7,508.2 713.7,509.6 714.6,508.6 715.6,508.9 716.5,508.9 717.5,510.0 718.4,508.0 719.4,509.7 720.3,508.7 721.2,510.7 722.2,510.2 723.1,511.0 724.1,508.3 725.0,508.9 726.0,509.7 726.9,509.9 727.9,510.4 728.8,509.2 729.8,508.9 730.7,510.3 731.6,510.0 732.6,509.7 733.5,509.3 734.5,508.1 735.4,509.5 736.4,509.4 737.3,508.0 738.3,508.5 739.2,509.3 739.7,509.6" fill="none" stroke="#3366cc" stroke-width="1.25" stroke-linejoin="round"/>
<polyline points="566.2,432.2 567.1,438.9 568.1,445.5 569.0,452.1 569.9,458.8 570.9,465.4 571.8,472.0 572.8,478.7 573.7,485.3 574.7,490.1 575.6,494.2 576.6,497.6 577.5,500.2 578.5,502.0 579.4,503.2 580.4,503.5 581.3,505.6 582.2,504.8 583.2,505.3 584.1,506.6 585.1,507.5 586.0,507.1 587.0,509.3 587.9,509.5 588.9,508.1 589.8,511.3 590.8,509.7 591.7,508.2 592.6,508.9 593.6,509.6 594.5,509.0 595.5,509.5 596.4,508.2 597.4,508.7 598.3,509.7 599.3,510.2 600.2,509.3 601.2,509.8 602.1,508.9 603.0,508.4 604.0,509.9 604.9,509.2 605.9,509.9 606.8,509.2 607.8,508.3 608.7,509.5 609.7,510.0 610.6,508.6 611.6,509.7 612.5,510.4 613.4,509.1 614.4,511.3 615.3,509.3 616.3,510.4 617.2,509.5 618.2,510.7 619.1,510.3 620.1,510.8 621.0,508.4 622.0,509.6 622.9,508.9 623.8,508.1 624.8,510.8 625.7,510.8 626.7,509.3 627.6,510.4 628.6,508.9 629.5,510.5 630.5,509.3 631.4,510.0 632.4,509.4 633.3,509.5 634.3,508.6 635.2,509.2 636.1,509.4 637.1,509.6 638.0,509.1 639.0,509.5 639.9,508.2 640.9,508.4 641.8,510.1 642.8,508.6 643.7,509.1 644.7,508.5 645.6,509.6 646.5,510.0 647.5,510.3 648.4,509.5 649.4,509.5 650.3,507.1 651.3,509.5 652.2,511.1 653.2,510.3 654.1,509.6 655.1,508.7 656.0,510.4 656.9,507.8 657.9,509.8 658.8,510.3 659.8,509.7 660.7,509.0 661.7,510.4 662.6,509.1 663.6,508.0 664.5,509.2 665.5,508.0 666.4,507.9 667.3,510.0 668.3,509.8 669.2,511.7 670.2,508.1 671.1,508.8 672.1,510.0 673.0,509.5 674.0,508.1 674.9,509.1 675.9,508.7 676.8,508.3 677.7,507.5 678.7,509.1 679.6,507.6 680.6,509.7 681.5,509.9 682.5,509.7 683.4,509.8 684.4,509.7 685.3,510.4 686.3,510.1 687.2,511.5 688.1,509.0 689.1,508.1 690.0,506.6 691.0,509.0 691.9,510.6 692.9,509.7 693.8,509.4 694.8,509.4 695.7,508.3 696.7,509.6 697.6,509.7 698.6,509.2 699.5,510.9 700.4,509.7 701.4,511.5 702.3,510.8 703.3,509.8 704.2,508.3 705.2,509.7 706.1,510.8 707.1,510.7 708.0,509.8 709.0,509.6 709.9,509.3 710.8,509.4 711.8,510.3 712.7,508.9 713.7,509.3 714.6,509.2 715.6,509.9 716.5,509.0 717.5,509.7 718.4,509.8 719.4,510.2 720.3,510.7 721.2,509.1 722.2,509.8 723.1,508.3 724.1,510.9 725.0,508.9 726.0,509.4 726.9,509.9 727.9,510.0 728.8,510.2 729.3,510.6" fill="none" stroke="#dc3912" stroke-width="1.25" stroke-linejoin="round"/>
<polyline points="566.2,432.2 567.1,438.9 568.1,445.5 569.0,452.1 569.9,458.8 570.9,465.4 571.8,472.0 572.8,478.7 573.7,485.3 574.7,490.1 575.6,494.2 576.6,497.6 577.5,500.2 578.5,502.0 579.4,503.2 580.4,503.5 581.3,504.7 582.2,507.5 583.2,506.2 584.1,505.6 585.1,507.9 586.0,507.8 587.0,507.9 587.9,509.4 588.9,507.6 589.8,508.9 590.8,509.5 591.7,509.9 592.6,508.1 593.6,507.7 594.5,508.9 595.5,508.7 596.4,509.9 597.4,509.0 598.3,508.7 599.3,509.3 600.2,508.8 601.2,509.8 602.1,508.2 603.0,508.6 604.0,510.9 604.9,510.0 605.9,508.7 606.8,509.0 607.8,511.5 608.7,509.0 609.7,509.8 610.6,509.2 611.6,507.8 612.5,509.8 613.4,510.0 614.4,507.9 615.3,509.9 616.3,509.3 617.2,509.9 618.2,509.8 619.1,509.1 620.1,509.7 621.0,511.3 622.0,510.3 622.9,509.5 623.8,512.4 624.8,509.4 625.7,510.2 626.7,510.1 627.6,508.7 628.6,509.0 629.5,509.3 630.5,509.7 631.4,508.1 632.4,509.2 633.3,508.9 634.3,508.6 635.2,507.7 636.1,509.5 637.1,507.6 638.0,509.6 639.0,508.6 639.9,508.2 640.9,509.2 641.8,510.3 642.8,510.0 643.7,510.7 644.7,509.2 645.6,510.5 646.5,509.6 647.5,510.2 648.4,510.2 649.4,509.8 650.3,509.0 651.3,508.8 652.2,507.7 653.2,508.3 654.1,508.5 655.1,509.1 656.0,509.1 656.9,510.5 657.9,511.2 658.8,509.1 659.8,508.4 660.7,508.9 661.7,510.7 662.6,510.6 663.6,509.8 664.5,509.0 665.5,509.0 666.4,508.0 667.3,510.0 668.3,510.3 669.2,510.5 670.2,508.7 671.1,510.0 672.1,510.2 673.0,510.1 674.0,509.3 674.9,507.8 675.9,509.5 676.8,510.7 677.7,509.6 678.7,509.4 679.6,509.6 680.6,509.6 681.5,508.9 682.5,508.5 683.4,510.9 684.4,510.6 685.3,510.5 686.3,508.3 687.2,510.6 688.1,510.7 689.1,510.0 690.0,508.1 691.0,509.0 691.9,509.7 692.9,509.7 693.8,507.9 694.8,510.3 695.7,510.7 696.7,508.6 697.6,509.8 698.6,510.4 699.5,510.0 700.4,511.2 701.4,511.1 702.3,510.9 703.3,509.7 704.2,509.0 705.2,511.3 706.1,508.9 707.1,508.3 708.0,508.7 709.0,508.3 709.9,507.0 710.8,510.1 711.8,509.9 712.7,508.4 713.7,509.4 714.6,509.4 715.6,509.2 716.5,508.8 717.5,510.0 718.4,508.5 719.4,509.1 720.3,509.5 721.2,509.0 722.2,509.5 723.1,509.7 724.1,510.2 725.0,509.1 726.0,509.1 726.9,509.6 727.9,508.9 728.8,509.4 729.8,510.2 730.7,508.6 731.6,510.5 732.6,508.7 733.5,510.2 734.5,510.0 735.4,510.3 736.4,510.6 737.3,509.0 738.3,509.7 739.2,509.2 740.2,511.2 741.1,510.7 742.0,508.6 743.0,509.0 743.9,508.9 744.9,510.7 745.8,510.1 746.8,507.7 747.7,508.8 748.7,509.8 749.6,508.0 750.1,509.4" fill="none" stroke="#ff9900" stroke-width="1.25" stroke-linejoin="round"/>
<polyline points="566.2,432.2 567.1,438.9 568.1,445.5 569.0,452.1 569.9,458.8 570.9,465.4 571.8,472.0 572.8,478.7 573.7,485.3 574.7,490.1 575.6,494.2 576.6,497.6 577.5,500.2 578.5,502.0 579.4,503.2 580.4,503.5 581.3,504.8 582.2,505.9 583.2,505.9 584.1,505.5 585.1,507.0 586.0,508.9 587.0,508.3 587.9,508.0 588.9,508.9 589.8,509.3 590.8,508.8 591.7,510.3 592.6,508.3 593.6,508.3 594.5,509.7 595.5,508.5 596.4,508.1 597.4,509.2 598.3,509.1 599.3,508.1 600.2,509.1 601.2,509.4 602.1,508.7 603.0,508.6 604.0,508.8 604.9,508.2 605.9,508.5 606.8,509.8 607.8,510.5 608.7,508.8 609.7,508.5 610.6,509.4 611.6,509.1 612.5,509.3 613.4,510.3 614.4,509.9 615.3,508.1 616.3,508.4 617.2,507.9 618.2,509.2 619.1,506.1 620.1,508.7 621.0,509.3 622.0,509.1 622.9,509.9 623.8,509.6 624.8,510.3 625.7,510.9 626.7,510.8 627.6,508.6 628.6,509.8 629.5,509.0 630.5,510.1 631.4,509.9 632.4,508.5 633.3,507.2 634.3,509.5 635.2,510.3 636.1,508.6 637.1,507.9 638.0,508.4 639.0,509.3 639.9,509.8 640.9,510.3 641.8,509.2 642.8,508.4 643.7,509.1 644.7,510.6 645.6,510.0 646.5,510.9 647.5,509.5 648.4,509.2 649.4,510.6 650.3,509.1 651.3,509.8 652.2,509.9 653.2,510.5 654.1,508.6 655.1,509.8 656.0,510.1 656.9,512.0 657.9,510.0 658.8,510.0 659.8,509.1 660.7,510.8 661.7,510.5 662.6,510.0 663.6,508.6 664.5,509.7 665.5,510.4 666.4,510.0 667.3,509.5 668.3,509.5 669.2,510.2 670.2,509.5 671.1,509.8 672.1,510.7 673.0,508.5 674.0,507.3 674.9,510.1 675.9,510.3 676.8,509.3 677.7,507.4 678.7,510.7 679.6,507.5 680.6,508.2 681.5,510.4 682.5,508.8 683.4,510.3 684.4,508.9 685.3,508.9 686.3,510.2 687.2,508.5 688.1,510.8 689.1,510.0 690.0,510.3 691.0,509.3 691.9,512.4 692.9,508.8 693.8,508.6 694.8,508.0 695.7,509.7 696.7,509.9 697.6,509.7 698.6,509.9 699.5,509.0 700.4,509.8 701.4,510.8 702.3,508.7 703.3,511.0 704.2,511.0 705.2,508.8 706.1,509.6 707.1,508.2 708.0,508.9 709.0,511.6 709.9,509.8 710.8,509.2 711.8,508.9 712.7,507.9 713.7,509.3 714.6,509.8 715.6,510.9 716.5,510.4 717.5,508.4 718.4,509.4 719.4,509.6 720.3,511.4 721.2,508.8 722.2,510.2 723.1,508.3 724.1,508.6 725.0,511.3 726.0,509.3 726.9,510.8" fill="none" stroke="#109618" stroke-width="1.25" stroke-linejoin="round"/>
<polyline points="566.2,432.2 567.1,438.9 568.1,445.5 569.0,452.1 569.9,458.8 570.9,465.4 571.8,472.0 572.8,478.7 573.7,485.3 574.7,490.1 575.6,494.2 576.6,497.6 577.5,500.2 578.5,502.0 579.4,503.2 580.4,503.5 581.3,504.7 582.2,503.7 583.2,504.3 584.1,506.6 585.1,505.8 586.0,508.1 587.0,507.6 587.9,506.0 588.9,508.2 589.8,508.6 590.8,509.7 591.7,511.0 592.6,508.8 593.6,509.0 594.5,509.6 595.5,509.1 596.4,509.1 597.4,508.7 598.3,508.4 599.3,510.2 600.2,509.4 601.2,509.6 602.1,510.8 603.0,509.7 604.0,510.8 604.9,510.9 605.9,510.8 606.8,510.7 607.8,511.4 608.7,509.9 609.7,511.0 610.6,508.8 611.6,509.5 612.5,508.8 613.4,509.0 614.4,509.4 615.3,510.5 616.3,509.0 617.2,508.6 618.2,509.6 619.1,509.5 620.1,509.7 621.0,509.0 622.0,508.9 622.9,509.0 623.8,510.7 624.8,509.5 625.7,509.8 626.7,509.0 627.6,509.6 628.6,509.5 629.5,509.4 630.5,509.1 631.4,508.9 632.4,508.9 633.3,510.1 634.3,510.1 635.2,508.1 636.1,507.9 637.1,509.4 638.0,508.5 639.0,509.3 639.9,510.3 640.9,508.7 641.8,509.8 642.8,510.4 643.7,509.9 644.7,508.4 645.6,508.9 646.5,509.2 647.5,508.5 648.4,508.7 649.4,509.4 650.3,510.1 651.3,510.6 652.2,508.6 653.2,509.6 654.1,509.1 655.1,509.4 656.0,510.3 656.9,511.0 657.9,509.5 658.8,509.0 659.8,509.7 660.7,509.6 661.7,509.5 662.6,508.7 663.6,510.1 664.5,508.3 665.5,511.4 666.4,509.7 667.3,510.1 668.3,510.3 669.2,509.2 670.2,508.7 671.1,509.5 672.1,510.0 673.0,509.5 674.0,509.9 674.9,509.5 675.9,509.3 676.8,509.6 677.7,510.5 678.7,509.1 679.6,511.6 680.6,509.7 681.5,511.1 682.5,510.9 683.4,510.8 684.4,510.5 685.3,508.8 686.3,507.8 687.2,509.6 688.1,510.0 689.1,508.7 690.0,509.2 691.0,508.6 691.9,508.4 692.9,508.0 693.8,510.2 694.8,510.2 695.7,510.2 696.7,511.0 697.6,511.0 698.6,509.8 699.5,512.6 700.4,508.6 701.4,507.6 702.3,509.2 703.3,509.2 704.2,510.2 705.2,509.3 706.1,508.9 707.1,509.8 708.0,510.1 709.0,508.9 709.9,510.0 710.8,509.6 711.8,509.8 712.7,510.1 713.7,509.7 714.6,508.1 715.6,510.1 716.5,509.3 717.5,509.4 718.4,510.3 719.4,510.2 720.3,508.5 721.2,508.8 722.2,509.7 723.1,509.4 724.1,508.7 725.0,509.7 726.0,511.0 726.9,509.7 727.9,510.1 728.8,509.8 729.8,509.0 730.7,510.4 731.6,509.5 732.6,510.3 733.5,510.1 734.5,509.5 735.0,508.7" fill="none" stroke="#990099" stroke-width="1.25" stroke-linejoin="round"/>
<line x1="662.50" y1="427" x2="662.50" y2="517" stroke="#ff0000" stroke-width="1"/>
<path d="M551.5,427.5 H557.5 V523 M551.5,517.5 H760.5 V523" fill="none" stroke="#555" stroke-width="1"/>
<line x1="554.5" y1="449.40" x2="557.5" y2="449.40" stroke="#555" stroke-width="1"/>
<text x="551.5" y="453.00" font-size="10" fill="#555" text-anchor="end">500</text>
<line x1="554.5" y1="476.20" x2="557.5" y2="476.20" stroke="#555" stroke-width="1"/>
<text x="551.5" y="479.80" font-size="10" fill="#555" text-anchor="end">400</text>
<line x1="554.5" y1="503.00" x2="557.5" y2="503.00" stroke="#555" stroke-width="1"/>
<text x="551.5" y="506.60" font-size="10" fill="#555" text-anchor="end">300</text>
<line x1="566.50" y1="517" x2="566.50" y2="520" stroke="#555" stroke-width="1"/>
<text x="566.50" y="529.7" font-size="10" fill="#555" text-anchor="middle">0</text>
<line x1="613.50" y1="517" x2="613.50" y2="520" stroke="#555" stroke-width="1"/>
<text x="613.50" y="529.7" font-size="10" fill="#555" text-anchor="middle">100</text>
<line x1="660.50" y1="517" x2="660.50" y2="520" stroke="#555" stroke-width="1"/>
<text x="660.50" y="529.7" font-size="10" fill="#555" text-anchor="middle">200</text>
<line x1="708.50" y1="517" x2="708.50" y2="520" stroke="#555" stroke-width="1"/>
<text x="708.50" y="529.7" font-size="10" fill="#555" text-anchor="middle">300</text>
<line x1="755.50" y1="517" x2="755.50" y2="520" stroke="#555" stroke-width="1"/>
<text x="755.50" y="529.7" font-size="10" fill="#555" text-anchor="middle">400</text>
<text x="593.2" y="412.8" font-size="13" fill="#333" textLength="74.9" lengthAdjust="spacingAndGlyphs">Convergence</text>
<text x="672.3" y="412.8" font-size="13" fill="#333" textLength="52" lengthAdjust="spacingAndGlyphs">indicator</text>
</svg>
</body></html>
